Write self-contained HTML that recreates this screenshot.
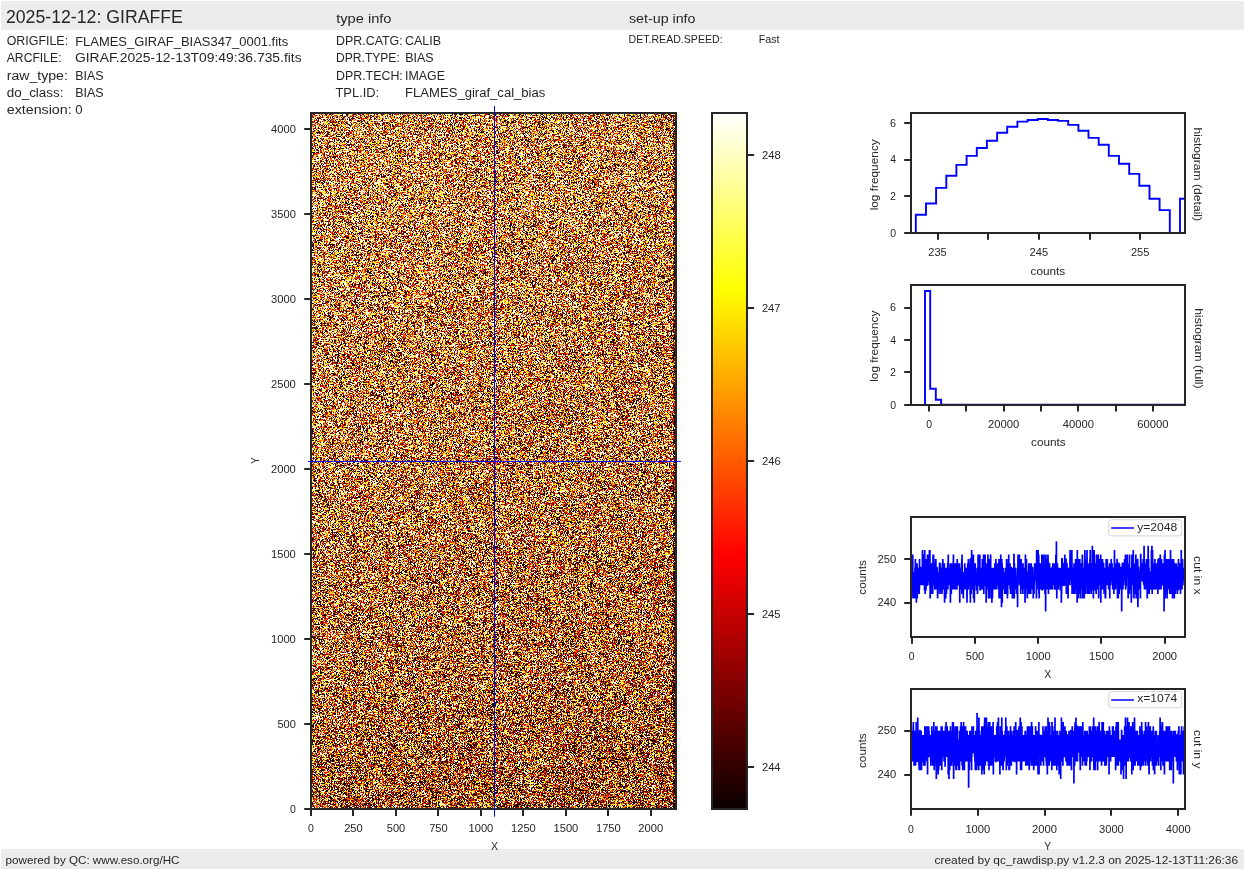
<!DOCTYPE html>
<html><head><meta charset="utf-8"><style>
html,body{margin:0;padding:0;background:#fff;width:1245px;height:870px;overflow:hidden}
#img{position:absolute;left:311px;top:113px;width:365px;height:696px;background:linear-gradient(rgb(201,135,75),rgb(183,112,56) 75%,rgb(177,107,51) 85%,rgb(165,95,43))}
svg{position:absolute;left:0;top:0}
text{font-family:"Liberation Sans",sans-serif;fill:#262626}
</style></head><body>
<canvas id="img" width="365" height="696"></canvas>
<svg width="1245" height="870">
<rect x="1" y="1" width="1243" height="29" fill="#ececec"/>
<rect x="1" y="849" width="1243" height="20" fill="#ececec"/>
<text x="5.92" y="23.30" font-size="17.64" textLength="176.95" lengthAdjust="spacingAndGlyphs">2025-12-12: GIRAFFE</text>
<text x="336.28" y="22.90" font-size="13.22" textLength="55.18" lengthAdjust="spacingAndGlyphs">type info</text>
<text x="628.97" y="22.60" font-size="13.22" textLength="66.55" lengthAdjust="spacingAndGlyphs">set-up info</text>
<text x="6.73" y="44.90" font-size="13.22" textLength="61.37" lengthAdjust="spacingAndGlyphs">ORIGFILE:</text>
<text x="75.21" y="45.60" font-size="13.22" textLength="212.96" lengthAdjust="spacingAndGlyphs">FLAMES_GIRAF_BIAS347_0001.fits</text>
<text x="6.72" y="61.90" font-size="13.22" textLength="54.80" lengthAdjust="spacingAndGlyphs">ARCFILE:</text>
<text x="74.99" y="61.90" font-size="13.22" textLength="226.66" lengthAdjust="spacingAndGlyphs">GIRAF.2025-12-13T09:49:36.735.fits</text>
<text x="6.81" y="80.00" font-size="13.22" textLength="61.00" lengthAdjust="spacingAndGlyphs">raw_type:</text>
<text x="75.25" y="80.00" font-size="13.22" textLength="28.42" lengthAdjust="spacingAndGlyphs">BIAS</text>
<text x="6.75" y="96.90" font-size="13.22" textLength="56.75" lengthAdjust="spacingAndGlyphs">do_class:</text>
<text x="75.25" y="96.90" font-size="13.22" textLength="28.42" lengthAdjust="spacingAndGlyphs">BIAS</text>
<text x="6.72" y="113.70" font-size="13.22" textLength="64.90" lengthAdjust="spacingAndGlyphs">extension:</text>
<text x="75.29" y="113.70" font-size="13.22" textLength="7.31" lengthAdjust="spacingAndGlyphs">0</text>
<text x="336.06" y="45.00" font-size="13.22" textLength="66.62" lengthAdjust="spacingAndGlyphs">DPR.CATG:</text>
<text x="404.96" y="45.00" font-size="13.22" textLength="36.19" lengthAdjust="spacingAndGlyphs">CALIB</text>
<text x="336.09" y="61.50" font-size="13.22" textLength="63.66" lengthAdjust="spacingAndGlyphs">DPR.TYPE:</text>
<text x="405.15" y="61.50" font-size="13.22" textLength="28.42" lengthAdjust="spacingAndGlyphs">BIAS</text>
<text x="336.06" y="79.80" font-size="13.22" textLength="66.72" lengthAdjust="spacingAndGlyphs">DPR.TECH:</text>
<text x="405.03" y="79.80" font-size="13.22" textLength="40.02" lengthAdjust="spacingAndGlyphs">IMAGE</text>
<text x="335.48" y="96.50" font-size="13.22" textLength="43.73" lengthAdjust="spacingAndGlyphs">TPL.ID:</text>
<text x="405.10" y="96.50" font-size="13.22" textLength="140.23" lengthAdjust="spacingAndGlyphs">FLAMES_giraf_cal_bias</text>
<text x="628.55" y="42.90" font-size="11.21" textLength="94.03" lengthAdjust="spacingAndGlyphs">DET.READ.SPEED:</text>
<text x="758.64" y="42.90" font-size="11.21" textLength="20.95" lengthAdjust="spacingAndGlyphs">Fast</text>
<text x="5.64" y="864.20" font-size="11.18" textLength="173.83" lengthAdjust="spacingAndGlyphs">powered by QC: www.eso.org/HC</text>
<text x="934.63" y="863.80" font-size="11.06" textLength="303.42" lengthAdjust="spacingAndGlyphs">created by qc_rawdisp.py v1.2.3 on 2025-12-13T11:26:36</text>
<line x1="311.00" y1="809.20" x2="311.00" y2="816.00" stroke="#262626" stroke-width="2.0"/>
<text x="308.06" y="832.00" font-size="10.53" textLength="5.82" lengthAdjust="spacingAndGlyphs">0</text>
<line x1="353.00" y1="809.20" x2="353.00" y2="816.00" stroke="#262626" stroke-width="2.0"/>
<text x="344.17" y="832.00" font-size="10.53" textLength="18.60" lengthAdjust="spacingAndGlyphs">250</text>
<line x1="396.00" y1="809.20" x2="396.00" y2="816.00" stroke="#262626" stroke-width="2.0"/>
<text x="386.77" y="832.00" font-size="10.53" textLength="18.48" lengthAdjust="spacingAndGlyphs">500</text>
<line x1="438.00" y1="809.20" x2="438.00" y2="816.00" stroke="#262626" stroke-width="2.0"/>
<text x="429.19" y="832.00" font-size="10.53" textLength="18.55" lengthAdjust="spacingAndGlyphs">750</text>
<line x1="481.00" y1="809.20" x2="481.00" y2="816.00" stroke="#262626" stroke-width="2.0"/>
<text x="468.52" y="832.00" font-size="10.53" textLength="24.80" lengthAdjust="spacingAndGlyphs">1000</text>
<line x1="523.00" y1="809.20" x2="523.00" y2="816.00" stroke="#262626" stroke-width="2.0"/>
<text x="511.00" y="832.00" font-size="10.53" textLength="24.80" lengthAdjust="spacingAndGlyphs">1250</text>
<line x1="566.00" y1="809.20" x2="566.00" y2="816.00" stroke="#262626" stroke-width="2.0"/>
<text x="553.49" y="832.00" font-size="10.53" textLength="24.80" lengthAdjust="spacingAndGlyphs">1500</text>
<line x1="608.00" y1="809.20" x2="608.00" y2="816.00" stroke="#262626" stroke-width="2.0"/>
<text x="595.97" y="832.00" font-size="10.53" textLength="24.80" lengthAdjust="spacingAndGlyphs">1750</text>
<line x1="651.00" y1="809.20" x2="651.00" y2="816.00" stroke="#262626" stroke-width="2.0"/>
<text x="638.38" y="832.00" font-size="10.53" textLength="24.88" lengthAdjust="spacingAndGlyphs">2000</text>
<line x1="304.20" y1="809.00" x2="311.00" y2="809.00" stroke="#262626" stroke-width="2.0"/>
<text x="290.00" y="813.00" font-size="10.53" textLength="5.82" lengthAdjust="spacingAndGlyphs">0</text>
<line x1="304.20" y1="724.00" x2="311.00" y2="724.00" stroke="#262626" stroke-width="2.0"/>
<text x="277.41" y="727.97" font-size="10.53" textLength="18.48" lengthAdjust="spacingAndGlyphs">500</text>
<line x1="304.20" y1="639.00" x2="311.00" y2="639.00" stroke="#262626" stroke-width="2.0"/>
<text x="271.04" y="642.93" font-size="10.53" textLength="24.80" lengthAdjust="spacingAndGlyphs">1000</text>
<line x1="304.20" y1="554.00" x2="311.00" y2="554.00" stroke="#262626" stroke-width="2.0"/>
<text x="271.04" y="557.90" font-size="10.53" textLength="24.80" lengthAdjust="spacingAndGlyphs">1500</text>
<line x1="304.20" y1="469.00" x2="311.00" y2="469.00" stroke="#262626" stroke-width="2.0"/>
<text x="270.96" y="472.86" font-size="10.53" textLength="24.88" lengthAdjust="spacingAndGlyphs">2000</text>
<line x1="304.20" y1="384.00" x2="311.00" y2="384.00" stroke="#262626" stroke-width="2.0"/>
<text x="270.96" y="387.83" font-size="10.53" textLength="24.88" lengthAdjust="spacingAndGlyphs">2500</text>
<line x1="304.20" y1="299.00" x2="311.00" y2="299.00" stroke="#262626" stroke-width="2.0"/>
<text x="271.08" y="302.79" font-size="10.53" textLength="24.76" lengthAdjust="spacingAndGlyphs">3000</text>
<line x1="304.20" y1="214.00" x2="311.00" y2="214.00" stroke="#262626" stroke-width="2.0"/>
<text x="271.08" y="217.76" font-size="10.53" textLength="24.76" lengthAdjust="spacingAndGlyphs">3500</text>
<line x1="304.20" y1="129.00" x2="311.00" y2="129.00" stroke="#262626" stroke-width="2.0"/>
<text x="271.05" y="132.73" font-size="10.53" textLength="24.79" lengthAdjust="spacingAndGlyphs">4000</text>
<text x="491.07" y="849.80" font-size="11.06" textLength="7.03" lengthAdjust="spacingAndGlyphs">X</text>
<text transform="translate(259.00,464.06) rotate(-90)" x="0" y="0" font-size="11.06" textLength="6.86" lengthAdjust="spacingAndGlyphs">Y</text>
<defs><linearGradient id="hotg" x1="0" y1="0" x2="0" y2="1"><stop offset="0.00" stop-color="rgb(255,255,255)"/><stop offset="0.01" stop-color="rgb(255,255,245)"/><stop offset="0.02" stop-color="rgb(255,255,235)"/><stop offset="0.03" stop-color="rgb(255,255,225)"/><stop offset="0.04" stop-color="rgb(255,255,215)"/><stop offset="0.05" stop-color="rgb(255,255,205)"/><stop offset="0.06" stop-color="rgb(255,255,195)"/><stop offset="0.07" stop-color="rgb(255,255,185)"/><stop offset="0.08" stop-color="rgb(255,255,175)"/><stop offset="0.09" stop-color="rgb(255,255,165)"/><stop offset="0.10" stop-color="rgb(255,255,155)"/><stop offset="0.11" stop-color="rgb(255,255,145)"/><stop offset="0.12" stop-color="rgb(255,255,135)"/><stop offset="0.13" stop-color="rgb(255,255,124)"/><stop offset="0.14" stop-color="rgb(255,255,114)"/><stop offset="0.15" stop-color="rgb(255,255,104)"/><stop offset="0.16" stop-color="rgb(255,255,94)"/><stop offset="0.17" stop-color="rgb(255,255,84)"/><stop offset="0.18" stop-color="rgb(255,255,74)"/><stop offset="0.19" stop-color="rgb(255,255,64)"/><stop offset="0.20" stop-color="rgb(255,255,54)"/><stop offset="0.21" stop-color="rgb(255,255,44)"/><stop offset="0.22" stop-color="rgb(255,255,34)"/><stop offset="0.23" stop-color="rgb(255,255,24)"/><stop offset="0.24" stop-color="rgb(255,255,14)"/><stop offset="0.25" stop-color="rgb(255,255,4)"/><stop offset="0.26" stop-color="rgb(255,251,0)"/><stop offset="0.27" stop-color="rgb(255,244,0)"/><stop offset="0.28" stop-color="rgb(255,238,0)"/><stop offset="0.29" stop-color="rgb(255,231,0)"/><stop offset="0.30" stop-color="rgb(255,224,0)"/><stop offset="0.31" stop-color="rgb(255,217,0)"/><stop offset="0.32" stop-color="rgb(255,211,0)"/><stop offset="0.33" stop-color="rgb(255,204,0)"/><stop offset="0.34" stop-color="rgb(255,197,0)"/><stop offset="0.35" stop-color="rgb(255,191,0)"/><stop offset="0.36" stop-color="rgb(255,184,0)"/><stop offset="0.37" stop-color="rgb(255,177,0)"/><stop offset="0.38" stop-color="rgb(255,171,0)"/><stop offset="0.39" stop-color="rgb(255,164,0)"/><stop offset="0.40" stop-color="rgb(255,157,0)"/><stop offset="0.41" stop-color="rgb(255,151,0)"/><stop offset="0.42" stop-color="rgb(255,144,0)"/><stop offset="0.43" stop-color="rgb(255,137,0)"/><stop offset="0.44" stop-color="rgb(255,130,0)"/><stop offset="0.45" stop-color="rgb(255,124,0)"/><stop offset="0.46" stop-color="rgb(255,117,0)"/><stop offset="0.47" stop-color="rgb(255,110,0)"/><stop offset="0.48" stop-color="rgb(255,104,0)"/><stop offset="0.49" stop-color="rgb(255,97,0)"/><stop offset="0.50" stop-color="rgb(255,90,0)"/><stop offset="0.51" stop-color="rgb(255,84,0)"/><stop offset="0.52" stop-color="rgb(255,77,0)"/><stop offset="0.53" stop-color="rgb(255,70,0)"/><stop offset="0.54" stop-color="rgb(255,64,0)"/><stop offset="0.55" stop-color="rgb(255,57,0)"/><stop offset="0.56" stop-color="rgb(255,50,0)"/><stop offset="0.57" stop-color="rgb(255,43,0)"/><stop offset="0.58" stop-color="rgb(255,37,0)"/><stop offset="0.59" stop-color="rgb(255,30,0)"/><stop offset="0.60" stop-color="rgb(255,23,0)"/><stop offset="0.61" stop-color="rgb(255,17,0)"/><stop offset="0.62" stop-color="rgb(255,10,0)"/><stop offset="0.63" stop-color="rgb(255,3,0)"/><stop offset="0.64" stop-color="rgb(252,0,0)"/><stop offset="0.65" stop-color="rgb(245,0,0)"/><stop offset="0.66" stop-color="rgb(238,0,0)"/><stop offset="0.67" stop-color="rgb(232,0,0)"/><stop offset="0.68" stop-color="rgb(225,0,0)"/><stop offset="0.69" stop-color="rgb(218,0,0)"/><stop offset="0.70" stop-color="rgb(211,0,0)"/><stop offset="0.71" stop-color="rgb(205,0,0)"/><stop offset="0.72" stop-color="rgb(198,0,0)"/><stop offset="0.73" stop-color="rgb(191,0,0)"/><stop offset="0.74" stop-color="rgb(185,0,0)"/><stop offset="0.75" stop-color="rgb(178,0,0)"/><stop offset="0.76" stop-color="rgb(171,0,0)"/><stop offset="0.77" stop-color="rgb(165,0,0)"/><stop offset="0.78" stop-color="rgb(158,0,0)"/><stop offset="0.79" stop-color="rgb(151,0,0)"/><stop offset="0.80" stop-color="rgb(144,0,0)"/><stop offset="0.81" stop-color="rgb(138,0,0)"/><stop offset="0.82" stop-color="rgb(131,0,0)"/><stop offset="0.83" stop-color="rgb(124,0,0)"/><stop offset="0.84" stop-color="rgb(118,0,0)"/><stop offset="0.85" stop-color="rgb(111,0,0)"/><stop offset="0.86" stop-color="rgb(104,0,0)"/><stop offset="0.87" stop-color="rgb(98,0,0)"/><stop offset="0.88" stop-color="rgb(91,0,0)"/><stop offset="0.89" stop-color="rgb(84,0,0)"/><stop offset="0.90" stop-color="rgb(78,0,0)"/><stop offset="0.91" stop-color="rgb(71,0,0)"/><stop offset="0.92" stop-color="rgb(64,0,0)"/><stop offset="0.93" stop-color="rgb(57,0,0)"/><stop offset="0.94" stop-color="rgb(51,0,0)"/><stop offset="0.95" stop-color="rgb(44,0,0)"/><stop offset="0.96" stop-color="rgb(37,0,0)"/><stop offset="0.97" stop-color="rgb(31,0,0)"/><stop offset="0.98" stop-color="rgb(24,0,0)"/><stop offset="0.99" stop-color="rgb(17,0,0)"/><stop offset="1.00" stop-color="rgb(11,0,0)"/></linearGradient></defs>
<rect x="712" y="113" width="35" height="696" fill="url(#hotg)" stroke="#262626" stroke-width="2"/>
<line x1="747.30" y1="767.00" x2="754.10" y2="767.00" stroke="#262626" stroke-width="2.0"/>
<text x="761.94" y="770.80" font-size="10.53" textLength="18.64" lengthAdjust="spacingAndGlyphs">244</text>
<line x1="747.30" y1="614.00" x2="754.10" y2="614.00" stroke="#262626" stroke-width="2.0"/>
<text x="761.95" y="617.80" font-size="10.53" textLength="18.45" lengthAdjust="spacingAndGlyphs">245</text>
<line x1="747.30" y1="461.00" x2="754.10" y2="461.00" stroke="#262626" stroke-width="2.0"/>
<text x="761.94" y="464.80" font-size="10.53" textLength="18.71" lengthAdjust="spacingAndGlyphs">246</text>
<line x1="747.30" y1="308.00" x2="754.10" y2="308.00" stroke="#262626" stroke-width="2.0"/>
<text x="761.94" y="311.80" font-size="10.53" textLength="18.56" lengthAdjust="spacingAndGlyphs">247</text>
<line x1="747.30" y1="155.00" x2="754.10" y2="155.00" stroke="#262626" stroke-width="2.0"/>
<text x="761.94" y="158.80" font-size="10.53" textLength="18.66" lengthAdjust="spacingAndGlyphs">248</text>
<rect x="311" y="113" width="365" height="696" fill="none" stroke="#262626" stroke-width="2"/>
<line x1="494.50" y1="106.00" x2="494.50" y2="816.70" stroke="#0000ff" stroke-width="1.0"/>
<line x1="308.00" y1="461.40" x2="680.90" y2="461.40" stroke="#0000ff" stroke-width="1.0"/>
<polyline fill="none" stroke="#0000ff" stroke-width="1.9" points="915.8,233.0 915.8,214.8 926.0,214.8 926.0,203.5 936.1,203.5 936.1,187.9 946.3,187.9 946.3,175.7 956.4,175.7 956.4,164.9 966.6,164.9 966.6,155.9 976.8,155.9 976.8,148.0 986.9,148.0 986.9,140.7 997.1,140.7 997.1,132.8 1007.2,132.8 1007.2,126.8 1017.4,126.8 1017.4,121.6 1027.6,121.6 1027.6,120.0 1037.7,120.0 1037.7,119.0 1047.9,119.0 1047.9,120.0 1058.0,120.0 1058.0,120.9 1068.2,120.9 1068.2,124.9 1078.4,124.9 1078.4,130.8 1088.5,130.8 1088.5,137.9 1098.7,137.9 1098.7,144.7 1108.8,144.7 1108.8,155.9 1119.0,155.9 1119.0,163.8 1129.2,163.8 1129.2,173.9 1139.3,173.9 1139.3,185.8 1149.5,185.8 1149.5,198.7 1159.6,198.7 1159.6,210.1 1169.8,210.1 1169.8,233.0 1180.0,233.0 1180.0,233.0 1180.0,198.7 1185.3,198.7"/>
<rect x="911" y="113" width="274" height="120" fill="none" stroke="#262626" stroke-width="2"/>
<line x1="904.20" y1="233.00" x2="911.00" y2="233.00" stroke="#262626" stroke-width="2.0"/>
<text x="890.20" y="236.80" font-size="10.53" textLength="5.82" lengthAdjust="spacingAndGlyphs">0</text>
<line x1="904.20" y1="196.00" x2="911.00" y2="196.00" stroke="#262626" stroke-width="2.0"/>
<text x="890.21" y="200.10" font-size="10.53" textLength="5.59" lengthAdjust="spacingAndGlyphs">2</text>
<line x1="904.20" y1="160.00" x2="911.00" y2="160.00" stroke="#262626" stroke-width="2.0"/>
<text x="890.26" y="163.40" font-size="10.53" textLength="5.81" lengthAdjust="spacingAndGlyphs">4</text>
<line x1="904.20" y1="123.00" x2="911.00" y2="123.00" stroke="#262626" stroke-width="2.0"/>
<text x="890.13" y="126.70" font-size="10.53" textLength="6.01" lengthAdjust="spacingAndGlyphs">6</text>
<line x1="938.00" y1="233.00" x2="938.00" y2="239.80" stroke="#262626" stroke-width="2.0"/>
<text x="928.30" y="256.00" font-size="10.53" textLength="18.45" lengthAdjust="spacingAndGlyphs">235</text>
<line x1="988.00" y1="233.00" x2="988.00" y2="239.80" stroke="#262626" stroke-width="2.0"/>
<line x1="1039.00" y1="233.00" x2="1039.00" y2="239.80" stroke="#262626" stroke-width="2.0"/>
<text x="1029.60" y="256.00" font-size="10.53" textLength="18.45" lengthAdjust="spacingAndGlyphs">245</text>
<line x1="1090.00" y1="233.00" x2="1090.00" y2="239.80" stroke="#262626" stroke-width="2.0"/>
<line x1="1140.00" y1="233.00" x2="1140.00" y2="239.80" stroke="#262626" stroke-width="2.0"/>
<text x="1130.90" y="256.00" font-size="10.53" textLength="18.45" lengthAdjust="spacingAndGlyphs">255</text>
<text x="1030.53" y="274.50" font-size="11.06" textLength="34.76" lengthAdjust="spacingAndGlyphs">counts</text>
<text transform="translate(877.91,210.37) rotate(-90)" x="0" y="0" font-size="11.06" textLength="71.09" lengthAdjust="spacingAndGlyphs">log frequency</text>
<text transform="translate(1194.09,127.45) rotate(90)" x="0" y="0" font-size="11.06" textLength="93.65" lengthAdjust="spacingAndGlyphs">histogram (detail)</text>
<polyline fill="none" stroke="#0000ff" stroke-width="1.9" points="925.0,404.7 925.0,291.0 930.2,291.0 930.2,388.7 935.8,388.7 935.8,399.7 941.1,399.7 941.1,404.7 1185.3,404.7"/>
<rect x="911" y="285" width="274" height="120" fill="none" stroke="#262626" stroke-width="2"/>
<line x1="904.20" y1="405.00" x2="911.00" y2="405.00" stroke="#262626" stroke-width="2.0"/>
<text x="890.20" y="408.50" font-size="10.53" textLength="5.82" lengthAdjust="spacingAndGlyphs">0</text>
<line x1="904.20" y1="372.00" x2="911.00" y2="372.00" stroke="#262626" stroke-width="2.0"/>
<text x="890.21" y="376.10" font-size="10.53" textLength="5.59" lengthAdjust="spacingAndGlyphs">2</text>
<line x1="904.20" y1="340.00" x2="911.00" y2="340.00" stroke="#262626" stroke-width="2.0"/>
<text x="890.26" y="343.70" font-size="10.53" textLength="5.81" lengthAdjust="spacingAndGlyphs">4</text>
<line x1="904.20" y1="308.00" x2="911.00" y2="308.00" stroke="#262626" stroke-width="2.0"/>
<text x="890.13" y="311.30" font-size="10.53" textLength="6.01" lengthAdjust="spacingAndGlyphs">6</text>
<line x1="929.00" y1="404.70" x2="929.00" y2="411.50" stroke="#262626" stroke-width="2.0"/>
<text x="926.16" y="428.10" font-size="10.53" textLength="5.82" lengthAdjust="spacingAndGlyphs">0</text>
<line x1="966.00" y1="404.70" x2="966.00" y2="411.50" stroke="#262626" stroke-width="2.0"/>
<line x1="1004.00" y1="404.70" x2="1004.00" y2="411.50" stroke="#262626" stroke-width="2.0"/>
<text x="988.09" y="428.10" font-size="10.53" textLength="31.21" lengthAdjust="spacingAndGlyphs">20000</text>
<line x1="1041.00" y1="404.70" x2="1041.00" y2="411.50" stroke="#262626" stroke-width="2.0"/>
<line x1="1078.00" y1="404.70" x2="1078.00" y2="411.50" stroke="#262626" stroke-width="2.0"/>
<text x="1062.81" y="428.10" font-size="10.53" textLength="31.12" lengthAdjust="spacingAndGlyphs">40000</text>
<line x1="1116.00" y1="404.70" x2="1116.00" y2="411.50" stroke="#262626" stroke-width="2.0"/>
<line x1="1153.00" y1="404.70" x2="1153.00" y2="411.50" stroke="#262626" stroke-width="2.0"/>
<text x="1137.31" y="428.10" font-size="10.53" textLength="31.26" lengthAdjust="spacingAndGlyphs">60000</text>
<text x="1031.03" y="446.00" font-size="11.06" textLength="34.76" lengthAdjust="spacingAndGlyphs">counts</text>
<text transform="translate(877.91,381.77) rotate(-90)" x="0" y="0" font-size="11.06" textLength="71.09" lengthAdjust="spacingAndGlyphs">log frequency</text>
<text transform="translate(1194.59,308.25) rotate(90)" x="0" y="0" font-size="11.06" textLength="80.36" lengthAdjust="spacingAndGlyphs">histogram (full)</text>
<path fill="none" stroke="#0000ff" stroke-width="1.7" d="M911.70,567.7L911.83,589.6L911.95,589.6L912.08,572.1L912.21,558.9L912.33,572.1L912.46,567.7L912.59,576.5L912.71,554.5L912.84,585.2L912.97,598.4L913.09,580.8L913.22,576.5L913.34,576.5L913.47,585.2L913.60,576.5L913.72,585.2L913.85,576.5L913.98,589.6L914.10,580.8L914.23,572.1L914.36,580.8L914.48,580.8L914.61,598.4L914.74,580.8L914.86,585.2L914.99,567.7L915.12,585.2L915.24,576.5L915.37,558.9L915.50,589.6L915.62,580.8L915.75,585.2L915.87,572.1L916.00,585.2L916.13,567.7L916.25,585.2L916.38,602.8L916.51,572.1L916.63,563.3L916.76,594.0L916.89,580.8L917.01,563.3L917.14,580.8L917.27,598.4L917.39,585.2L917.52,567.7L917.65,594.0L917.77,589.6L917.90,576.5L918.03,567.7L918.15,585.2L918.28,585.2L918.40,576.5L918.53,585.2L918.66,585.2L918.78,576.5L918.91,572.1L919.04,572.1L919.16,594.0L919.29,567.7L919.42,589.6L919.54,558.9L919.67,576.5L919.80,580.8L919.92,580.8L920.05,580.8L920.18,576.5L920.30,585.2L920.43,572.1L920.56,585.2L920.68,567.7L920.81,567.7L920.93,585.2L921.06,576.5L921.19,576.5L921.31,576.5L921.44,580.8L921.57,585.2L921.69,580.8L921.82,585.2L921.95,576.5L922.07,585.2L922.20,580.8L922.33,585.2L922.45,550.1L922.58,572.1L922.71,585.2L922.83,580.8L922.96,572.1L923.09,558.9L923.21,572.1L923.34,567.7L923.46,554.5L923.59,585.2L923.72,576.5L923.84,580.8L923.97,585.2L924.10,580.8L924.22,585.2L924.35,563.3L924.48,589.6L924.60,589.6L924.73,550.1L924.86,572.1L924.98,563.3L925.11,594.0L925.24,558.9L925.36,567.7L925.49,576.5L925.62,567.7L925.74,558.9L925.87,589.6L925.99,589.6L926.12,580.8L926.25,558.9L926.37,572.1L926.50,580.8L926.63,572.1L926.75,576.5L926.88,572.1L927.01,585.2L927.13,585.2L927.26,567.7L927.39,576.5L927.51,554.5L927.64,585.2L927.77,576.5L927.89,563.3L928.02,576.5L928.15,576.5L928.27,576.5L928.40,580.8L928.52,572.1L928.65,576.5L928.78,580.8L928.90,554.5L929.03,580.8L929.16,580.8L929.28,576.5L929.41,550.1L929.54,576.5L929.66,585.2L929.79,572.1L929.92,550.1L930.04,580.8L930.17,598.4L930.30,594.0L930.42,580.8L930.55,580.8L930.68,576.5L930.80,572.1L930.93,594.0L931.05,572.1L931.18,585.2L931.31,572.1L931.43,563.3L931.56,594.0L931.69,589.6L931.81,580.8L931.94,567.7L932.07,576.5L932.19,572.1L932.32,576.5L932.45,572.1L932.57,589.6L932.70,594.0L932.83,576.5L932.95,567.7L933.08,554.5L933.21,576.5L933.33,572.1L933.46,580.8L933.58,554.5L933.71,567.7L933.84,576.5L933.96,558.9L934.09,585.2L934.22,572.1L934.34,567.7L934.47,580.8L934.60,580.8L934.72,572.1L934.85,589.6L934.98,585.2L935.10,572.1L935.23,563.3L935.36,576.5L935.48,567.7L935.61,572.1L935.74,576.5L935.86,558.9L935.99,580.8L936.11,580.8L936.24,589.6L936.37,576.5L936.49,576.5L936.62,585.2L936.75,576.5L936.87,567.7L937.00,567.7L937.13,580.8L937.25,567.7L937.38,572.1L937.51,576.5L937.63,598.4L937.76,572.1L937.89,585.2L938.01,594.0L938.14,585.2L938.27,585.2L938.39,580.8L938.52,589.6L938.64,585.2L938.77,576.5L938.90,585.2L939.02,576.5L939.15,580.8L939.28,580.8L939.40,580.8L939.53,563.3L939.66,563.3L939.78,580.8L939.91,585.2L940.04,594.0L940.16,563.3L940.29,580.8L940.42,572.1L940.54,563.3L940.67,567.7L940.80,576.5L940.92,567.7L941.05,572.1L941.17,567.7L941.30,589.6L941.43,589.6L941.55,585.2L941.68,576.5L941.81,585.2L941.93,594.0L942.06,589.6L942.19,580.8L942.31,585.2L942.44,580.8L942.57,576.5L942.69,580.8L942.82,558.9L942.95,580.8L943.07,589.6L943.20,576.5L943.33,585.2L943.45,567.7L943.58,585.2L943.70,572.1L943.83,580.8L943.96,585.2L944.08,576.5L944.21,576.5L944.34,563.3L944.46,589.6L944.59,602.8L944.72,572.1L944.84,567.7L944.97,576.5L945.10,585.2L945.22,576.5L945.35,585.2L945.48,572.1L945.60,576.5L945.73,598.4L945.86,576.5L945.98,589.6L946.11,589.6L946.23,567.7L946.36,572.1L946.49,594.0L946.61,585.2L946.74,580.8L946.87,567.7L946.99,585.2L947.12,589.6L947.25,576.5L947.37,576.5L947.50,585.2L947.63,563.3L947.75,576.5L947.88,589.6L948.01,567.7L948.13,572.1L948.26,554.5L948.38,572.1L948.51,585.2L948.64,576.5L948.76,580.8L948.89,572.1L949.02,585.2L949.14,580.8L949.27,580.8L949.40,580.8L949.52,567.7L949.65,576.5L949.78,576.5L949.90,580.8L950.03,567.7L950.16,572.1L950.28,563.3L950.41,602.8L950.54,567.7L950.66,576.5L950.79,563.3L950.92,576.5L951.04,585.2L951.17,580.8L951.29,594.0L951.42,585.2L951.55,567.7L951.67,563.3L951.80,572.1L951.93,563.3L952.05,572.1L952.18,585.2L952.31,580.8L952.43,576.5L952.56,580.8L952.69,580.8L952.81,572.1L952.94,589.6L953.07,572.1L953.19,580.8L953.32,563.3L953.45,554.5L953.57,572.1L953.70,585.2L953.82,567.7L953.95,563.3L954.08,589.6L954.20,572.1L954.33,576.5L954.46,580.8L954.58,572.1L954.71,572.1L954.84,576.5L954.96,567.7L955.09,576.5L955.22,563.3L955.34,572.1L955.47,567.7L955.60,589.6L955.72,563.3L955.85,580.8L955.98,563.3L956.10,580.8L956.23,589.6L956.35,580.8L956.48,580.8L956.61,572.1L956.73,585.2L956.86,589.6L956.99,576.5L957.11,585.2L957.24,558.9L957.37,585.2L957.49,563.3L957.62,567.7L957.75,572.1L957.87,576.5L958.00,567.7L958.13,567.7L958.25,563.3L958.38,576.5L958.50,572.1L958.63,576.5L958.76,576.5L958.88,572.1L959.01,572.1L959.14,585.2L959.26,585.2L959.39,580.8L959.52,563.3L959.64,580.8L959.77,602.8L959.90,567.7L960.02,580.8L960.15,589.6L960.28,576.5L960.40,572.1L960.53,567.7L960.66,572.1L960.78,572.1L960.91,589.6L961.04,580.8L961.16,567.7L961.29,580.8L961.41,576.5L961.54,576.5L961.67,572.1L961.79,558.9L961.92,594.0L962.05,554.5L962.17,585.2L962.30,589.6L962.43,580.8L962.55,580.8L962.68,594.0L962.81,585.2L962.93,585.2L963.06,585.2L963.19,576.5L963.31,598.4L963.44,585.2L963.57,576.5L963.69,580.8L963.82,576.5L963.94,572.1L964.07,580.8L964.20,576.5L964.32,580.8L964.45,580.8L964.58,589.6L964.70,563.3L964.83,567.7L964.96,585.2L965.08,589.6L965.21,567.7L965.34,572.1L965.46,589.6L965.59,576.5L965.72,567.7L965.84,589.6L965.97,576.5L966.10,572.1L966.22,589.6L966.35,580.8L966.47,576.5L966.60,572.1L966.73,576.5L966.85,576.5L966.98,602.8L967.11,589.6L967.23,580.8L967.36,567.7L967.49,580.8L967.61,580.8L967.74,563.3L967.87,572.1L967.99,576.5L968.12,576.5L968.25,589.6L968.37,558.9L968.50,585.2L968.62,558.9L968.75,585.2L968.88,572.1L969.00,585.2L969.13,580.8L969.26,567.7L969.38,576.5L969.51,576.5L969.64,567.7L969.76,585.2L969.89,576.5L970.02,563.3L970.14,594.0L970.27,567.7L970.40,602.8L970.52,576.5L970.65,558.9L970.78,558.9L970.90,576.5L971.03,558.9L971.16,580.8L971.28,594.0L971.41,563.3L971.53,576.5L971.66,550.1L971.79,585.2L971.91,589.6L972.04,567.7L972.17,576.5L972.29,563.3L972.42,572.1L972.55,589.6L972.67,580.8L972.80,585.2L972.93,563.3L973.05,563.3L973.18,572.1L973.31,580.8L973.43,554.5L973.56,598.4L973.69,567.7L973.81,585.2L973.94,580.8L974.06,567.7L974.19,594.0L974.32,602.8L974.44,585.2L974.57,580.8L974.70,576.5L974.82,567.7L974.95,572.1L975.08,572.1L975.20,563.3L975.33,580.8L975.46,585.2L975.58,572.1L975.71,576.5L975.84,567.7L975.96,580.8L976.09,580.8L976.22,580.8L976.34,576.5L976.47,589.6L976.59,589.6L976.72,585.2L976.85,576.5L976.97,576.5L977.10,572.1L977.23,589.6L977.35,580.8L977.48,594.0L977.61,585.2L977.73,567.7L977.86,576.5L977.99,572.1L978.11,554.5L978.24,585.2L978.37,585.2L978.49,572.1L978.62,572.1L978.75,572.1L978.87,576.5L979.00,580.8L979.12,567.7L979.25,572.1L979.38,567.7L979.50,576.5L979.63,563.3L979.76,585.2L979.88,554.5L980.01,589.6L980.14,589.6L980.26,589.6L980.39,567.7L980.52,589.6L980.64,580.8L980.77,585.2L980.90,585.2L981.02,572.1L981.15,572.1L981.28,576.5L981.40,567.7L981.53,580.8L981.65,572.1L981.78,589.6L981.91,580.8L982.03,576.5L982.16,580.8L982.29,563.3L982.41,558.9L982.54,572.1L982.67,558.9L982.79,572.1L982.92,580.8L983.05,580.8L983.17,576.5L983.30,585.2L983.43,589.6L983.55,554.5L983.68,580.8L983.81,594.0L983.93,585.2L984.06,585.2L984.18,585.2L984.31,580.8L984.44,576.5L984.56,576.5L984.69,576.5L984.82,567.7L984.94,567.7L985.07,554.5L985.20,580.8L985.32,572.1L985.45,585.2L985.58,585.2L985.70,580.8L985.83,567.7L985.96,580.8L986.08,594.0L986.21,602.8L986.34,585.2L986.46,572.1L986.59,589.6L986.71,572.1L986.84,563.3L986.97,572.1L987.09,585.2L987.22,585.2L987.35,576.5L987.47,576.5L987.60,572.1L987.73,580.8L987.85,589.6L987.98,554.5L988.11,585.2L988.23,572.1L988.36,576.5L988.49,580.8L988.61,598.4L988.74,585.2L988.87,580.8L988.99,572.1L989.12,567.7L989.24,558.9L989.37,576.5L989.50,567.7L989.62,576.5L989.75,576.5L989.88,576.5L990.00,598.4L990.13,558.9L990.26,576.5L990.38,580.8L990.51,585.2L990.64,554.5L990.76,585.2L990.89,585.2L991.02,576.5L991.14,580.8L991.27,589.6L991.40,585.2L991.52,576.5L991.65,580.8L991.77,585.2L991.90,602.8L992.03,572.1L992.15,567.7L992.28,580.8L992.41,598.4L992.53,594.0L992.66,585.2L992.79,580.8L992.91,572.1L993.04,567.7L993.17,572.1L993.29,585.2L993.42,567.7L993.55,589.6L993.67,580.8L993.80,572.1L993.93,576.5L994.05,567.7L994.18,576.5L994.30,572.1L994.43,572.1L994.56,567.7L994.68,585.2L994.81,580.8L994.94,563.3L995.06,567.7L995.19,589.6L995.32,567.7L995.44,580.8L995.57,576.5L995.70,580.8L995.82,558.9L995.95,572.1L996.08,580.8L996.20,580.8L996.33,576.5L996.46,585.2L996.58,576.5L996.71,589.6L996.83,585.2L996.96,572.1L997.09,585.2L997.21,580.8L997.34,580.8L997.47,576.5L997.59,567.7L997.72,563.3L997.85,585.2L997.97,572.1L998.10,580.8L998.23,572.1L998.35,576.5L998.48,585.2L998.61,567.7L998.73,585.2L998.86,589.6L998.99,558.9L999.11,598.4L999.24,576.5L999.36,572.1L999.49,585.2L999.62,580.8L999.74,572.1L999.87,589.6L1000.00,563.3L1000.12,567.7L1000.25,598.4L1000.38,567.7L1000.50,589.6L1000.63,576.5L1000.76,554.5L1000.88,594.0L1001.01,567.7L1001.14,580.8L1001.26,563.3L1001.39,558.9L1001.52,607.2L1001.64,576.5L1001.77,558.9L1001.89,576.5L1002.02,594.0L1002.15,563.3L1002.27,602.8L1002.40,585.2L1002.53,585.2L1002.65,580.8L1002.78,572.1L1002.91,580.8L1003.03,576.5L1003.16,589.6L1003.29,580.8L1003.41,580.8L1003.54,567.7L1003.67,580.8L1003.79,585.2L1003.92,585.2L1004.05,572.1L1004.17,585.2L1004.30,572.1L1004.42,576.5L1004.55,572.1L1004.68,580.8L1004.80,594.0L1004.93,576.5L1005.06,576.5L1005.18,576.5L1005.31,572.1L1005.44,585.2L1005.56,589.6L1005.69,580.8L1005.82,567.7L1005.94,580.8L1006.07,576.5L1006.20,585.2L1006.32,594.0L1006.45,576.5L1006.58,558.9L1006.70,580.8L1006.83,558.9L1006.95,585.2L1007.08,585.2L1007.21,563.3L1007.33,576.5L1007.46,598.4L1007.59,585.2L1007.71,594.0L1007.84,576.5L1007.97,572.1L1008.09,572.1L1008.22,572.1L1008.35,567.7L1008.47,580.8L1008.60,572.1L1008.73,554.5L1008.85,567.7L1008.98,576.5L1009.11,576.5L1009.23,580.8L1009.36,585.2L1009.48,576.5L1009.61,585.2L1009.74,567.7L1009.86,572.1L1009.99,563.3L1010.12,589.6L1010.24,572.1L1010.37,567.7L1010.50,567.7L1010.62,594.0L1010.75,572.1L1010.88,589.6L1011.00,567.7L1011.13,567.7L1011.26,589.6L1011.38,589.6L1011.51,576.5L1011.63,585.2L1011.76,572.1L1011.89,589.6L1012.01,576.5L1012.14,576.5L1012.27,567.7L1012.39,598.4L1012.52,572.1L1012.65,585.2L1012.77,598.4L1012.90,585.2L1013.03,567.7L1013.15,576.5L1013.28,576.5L1013.41,576.5L1013.53,576.5L1013.66,572.1L1013.79,594.0L1013.91,554.5L1014.04,554.5L1014.17,585.2L1014.29,598.4L1014.42,563.3L1014.54,580.8L1014.67,589.6L1014.80,576.5L1014.92,585.2L1015.05,572.1L1015.18,572.1L1015.30,572.1L1015.43,585.2L1015.56,585.2L1015.68,576.5L1015.81,567.7L1015.94,576.5L1016.06,576.5L1016.19,589.6L1016.32,576.5L1016.44,594.0L1016.57,585.2L1016.70,585.2L1016.82,585.2L1016.95,576.5L1017.07,576.5L1017.20,589.6L1017.33,576.5L1017.45,576.5L1017.58,607.2L1017.71,576.5L1017.83,572.1L1017.96,563.3L1018.09,554.5L1018.21,572.1L1018.34,576.5L1018.47,576.5L1018.59,576.5L1018.72,576.5L1018.85,576.5L1018.97,580.8L1019.10,563.3L1019.23,572.1L1019.35,554.5L1019.48,585.2L1019.60,572.1L1019.73,572.1L1019.86,563.3L1019.98,567.7L1020.11,558.9L1020.24,572.1L1020.36,580.8L1020.49,567.7L1020.62,576.5L1020.74,594.0L1020.87,572.1L1021.00,572.1L1021.12,558.9L1021.25,572.1L1021.38,580.8L1021.50,585.2L1021.63,572.1L1021.76,572.1L1021.88,567.7L1022.01,585.2L1022.13,589.6L1022.26,585.2L1022.39,572.1L1022.51,563.3L1022.64,585.2L1022.77,572.1L1022.89,594.0L1023.02,563.3L1023.15,585.2L1023.27,580.8L1023.40,567.7L1023.53,572.1L1023.65,572.1L1023.78,576.5L1023.91,580.8L1024.03,572.1L1024.16,572.1L1024.29,580.8L1024.41,580.8L1024.54,589.6L1024.66,572.1L1024.79,567.7L1024.92,589.6L1025.04,602.8L1025.17,580.8L1025.30,594.0L1025.42,554.5L1025.55,567.7L1025.68,589.6L1025.80,580.8L1025.93,572.1L1026.06,576.5L1026.18,558.9L1026.31,576.5L1026.44,558.9L1026.56,576.5L1026.69,572.1L1026.82,572.1L1026.94,576.5L1027.07,572.1L1027.19,580.8L1027.32,598.4L1027.45,576.5L1027.57,585.2L1027.70,580.8L1027.83,589.6L1027.95,576.5L1028.08,572.1L1028.21,572.1L1028.33,576.5L1028.46,572.1L1028.59,585.2L1028.71,567.7L1028.84,563.3L1028.97,567.7L1029.09,594.0L1029.22,585.2L1029.35,563.3L1029.47,576.5L1029.60,567.7L1029.72,572.1L1029.85,567.7L1029.98,572.1L1030.10,563.3L1030.23,576.5L1030.36,585.2L1030.48,576.5L1030.61,585.2L1030.74,594.0L1030.86,580.8L1030.99,567.7L1031.12,580.8L1031.24,563.3L1031.37,576.5L1031.50,580.8L1031.62,576.5L1031.75,567.7L1031.88,589.6L1032.00,580.8L1032.13,580.8L1032.25,567.7L1032.38,567.7L1032.51,585.2L1032.63,567.7L1032.76,576.5L1032.89,576.5L1033.01,580.8L1033.14,585.2L1033.27,598.4L1033.39,576.5L1033.52,576.5L1033.65,576.5L1033.77,580.8L1033.90,580.8L1034.03,594.0L1034.15,580.8L1034.28,585.2L1034.40,580.8L1034.53,572.1L1034.66,563.3L1034.78,580.8L1034.91,576.5L1035.04,576.5L1035.16,563.3L1035.29,572.1L1035.42,567.7L1035.54,576.5L1035.67,580.8L1035.80,572.1L1035.92,580.8L1036.05,563.3L1036.18,580.8L1036.30,576.5L1036.43,598.4L1036.56,585.2L1036.68,550.1L1036.81,576.5L1036.93,585.2L1037.06,589.6L1037.19,572.1L1037.31,585.2L1037.44,576.5L1037.57,580.8L1037.69,572.1L1037.82,567.7L1037.95,567.7L1038.07,550.1L1038.20,563.3L1038.33,585.2L1038.45,567.7L1038.58,558.9L1038.71,554.5L1038.83,567.7L1038.96,594.0L1039.09,567.7L1039.21,598.4L1039.34,572.1L1039.47,572.1L1039.59,567.7L1039.72,576.5L1039.84,589.6L1039.97,563.3L1040.10,580.8L1040.22,572.1L1040.35,567.7L1040.48,572.1L1040.60,576.5L1040.73,580.8L1040.86,567.7L1040.98,589.6L1041.11,572.1L1041.24,580.8L1041.36,563.3L1041.49,585.2L1041.62,572.1L1041.74,585.2L1041.87,554.5L1042.00,585.2L1042.12,589.6L1042.25,589.6L1042.37,572.1L1042.50,576.5L1042.63,567.7L1042.75,576.5L1042.88,558.9L1043.01,589.6L1043.13,554.5L1043.26,589.6L1043.39,585.2L1043.51,572.1L1043.64,580.8L1043.77,580.8L1043.89,589.6L1044.02,554.5L1044.15,589.6L1044.27,572.1L1044.40,580.8L1044.53,589.6L1044.65,567.7L1044.78,576.5L1044.90,580.8L1045.03,594.0L1045.16,580.8L1045.28,572.1L1045.41,567.7L1045.54,585.2L1045.66,611.6L1045.79,563.3L1045.92,554.5L1046.04,563.3L1046.17,567.7L1046.30,585.2L1046.42,563.3L1046.55,572.1L1046.68,567.7L1046.80,589.6L1046.93,576.5L1047.06,589.6L1047.18,580.8L1047.31,563.3L1047.43,558.9L1047.56,589.6L1047.69,576.5L1047.81,572.1L1047.94,554.5L1048.07,558.9L1048.19,572.1L1048.32,567.7L1048.45,594.0L1048.57,563.3L1048.70,563.3L1048.83,585.2L1048.95,589.6L1049.08,585.2L1049.21,563.3L1049.33,580.8L1049.46,576.5L1049.59,563.3L1049.71,576.5L1049.84,580.8L1049.96,576.5L1050.09,567.7L1050.22,576.5L1050.34,567.7L1050.47,589.6L1050.60,572.1L1050.72,589.6L1050.85,580.8L1050.98,589.6L1051.10,572.1L1051.23,580.8L1051.36,576.5L1051.48,576.5L1051.61,580.8L1051.74,576.5L1051.86,567.7L1051.99,576.5L1052.12,567.7L1052.24,567.7L1052.37,585.2L1052.49,585.2L1052.62,589.6L1052.75,576.5L1052.87,563.3L1053.00,572.1L1053.13,572.1L1053.25,572.1L1053.38,580.8L1053.51,580.8L1053.63,576.5L1053.76,567.7L1053.89,585.2L1054.01,580.8L1054.14,580.8L1054.27,563.3L1054.39,567.7L1054.52,576.5L1054.64,585.2L1054.77,576.5L1054.90,589.6L1055.02,572.1L1055.15,585.2L1055.28,589.6L1055.40,580.8L1055.53,589.6L1055.66,576.5L1055.78,572.1L1055.91,554.5L1056.04,589.6L1056.16,572.1L1056.29,589.6L1056.42,541.3L1056.54,576.5L1056.67,580.8L1056.80,598.4L1056.92,563.3L1057.05,576.5L1057.17,567.7L1057.30,572.1L1057.43,563.3L1057.55,580.8L1057.68,580.8L1057.81,589.6L1057.93,567.7L1058.06,580.8L1058.19,589.6L1058.31,585.2L1058.44,576.5L1058.57,576.5L1058.69,576.5L1058.82,580.8L1058.95,567.7L1059.07,572.1L1059.20,576.5L1059.33,572.1L1059.45,572.1L1059.58,585.2L1059.70,580.8L1059.83,580.8L1059.96,572.1L1060.08,580.8L1060.21,589.6L1060.34,589.6L1060.46,580.8L1060.59,567.7L1060.72,572.1L1060.84,585.2L1060.97,572.1L1061.10,580.8L1061.22,585.2L1061.35,602.8L1061.48,585.2L1061.60,594.0L1061.73,580.8L1061.86,558.9L1061.98,558.9L1062.11,585.2L1062.24,558.9L1062.36,572.1L1062.49,563.3L1062.61,563.3L1062.74,580.8L1062.87,585.2L1062.99,576.5L1063.12,563.3L1063.25,585.2L1063.37,585.2L1063.50,585.2L1063.63,580.8L1063.75,572.1L1063.88,576.5L1064.01,585.2L1064.13,585.2L1064.26,580.8L1064.39,580.8L1064.51,576.5L1064.64,580.8L1064.77,554.5L1064.89,585.2L1065.02,563.3L1065.14,585.2L1065.27,580.8L1065.40,558.9L1065.52,558.9L1065.65,572.1L1065.78,563.3L1065.90,576.5L1066.03,558.9L1066.16,572.1L1066.28,585.2L1066.41,594.0L1066.54,576.5L1066.66,572.1L1066.79,580.8L1066.92,567.7L1067.04,563.3L1067.17,594.0L1067.30,572.1L1067.42,580.8L1067.55,589.6L1067.67,589.6L1067.80,572.1L1067.93,585.2L1068.05,598.4L1068.18,572.1L1068.31,576.5L1068.43,572.1L1068.56,572.1L1068.69,567.7L1068.81,580.8L1068.94,580.8L1069.07,567.7L1069.19,576.5L1069.32,580.8L1069.45,572.1L1069.57,572.1L1069.70,585.2L1069.83,576.5L1069.95,563.3L1070.08,550.1L1070.20,576.5L1070.33,572.1L1070.46,567.7L1070.58,572.1L1070.71,580.8L1070.84,576.5L1070.96,576.5L1071.09,572.1L1071.22,576.5L1071.34,576.5L1071.47,554.5L1071.60,563.3L1071.72,585.2L1071.85,550.1L1071.98,572.1L1072.10,594.0L1072.23,572.1L1072.36,576.5L1072.48,576.5L1072.61,567.7L1072.73,572.1L1072.86,576.5L1072.99,567.7L1073.11,589.6L1073.24,580.8L1073.37,585.2L1073.49,576.5L1073.62,572.1L1073.75,576.5L1073.87,594.0L1074.00,563.3L1074.13,567.7L1074.25,594.0L1074.38,567.7L1074.51,567.7L1074.63,572.1L1074.76,576.5L1074.88,572.1L1075.01,576.5L1075.14,589.6L1075.26,576.5L1075.39,580.8L1075.52,576.5L1075.64,558.9L1075.77,576.5L1075.90,585.2L1076.02,580.8L1076.15,594.0L1076.28,585.2L1076.40,589.6L1076.53,594.0L1076.66,589.6L1076.78,576.5L1076.91,594.0L1077.04,585.2L1077.16,602.8L1077.29,550.1L1077.41,580.8L1077.54,580.8L1077.67,576.5L1077.79,580.8L1077.92,558.9L1078.05,572.1L1078.17,576.5L1078.30,598.4L1078.43,563.3L1078.55,585.2L1078.68,576.5L1078.81,594.0L1078.93,580.8L1079.06,589.6L1079.19,594.0L1079.31,558.9L1079.44,572.1L1079.57,576.5L1079.69,572.1L1079.82,558.9L1079.95,589.6L1080.07,589.6L1080.20,589.6L1080.32,572.1L1080.45,598.4L1080.58,585.2L1080.70,567.7L1080.83,576.5L1080.96,576.5L1081.08,576.5L1081.21,567.7L1081.34,576.5L1081.46,563.3L1081.59,576.5L1081.72,576.5L1081.84,567.7L1081.97,589.6L1082.10,580.8L1082.22,572.1L1082.35,554.5L1082.48,598.4L1082.60,567.7L1082.73,585.2L1082.85,572.1L1082.98,572.1L1083.11,576.5L1083.23,572.1L1083.36,567.7L1083.49,589.6L1083.61,576.5L1083.74,576.5L1083.87,585.2L1083.99,567.7L1084.12,585.2L1084.25,598.4L1084.37,580.8L1084.50,563.3L1084.63,576.5L1084.75,558.9L1084.88,550.1L1085.01,558.9L1085.13,576.5L1085.26,580.8L1085.38,572.1L1085.51,585.2L1085.64,589.6L1085.76,594.0L1085.89,572.1L1086.02,558.9L1086.14,563.3L1086.27,580.8L1086.40,572.1L1086.52,580.8L1086.65,567.7L1086.78,585.2L1086.90,572.1L1087.03,550.1L1087.16,580.8L1087.28,563.3L1087.41,580.8L1087.54,580.8L1087.66,594.0L1087.79,567.7L1087.91,580.8L1088.04,580.8L1088.17,594.0L1088.29,572.1L1088.42,567.7L1088.55,572.1L1088.67,576.5L1088.80,567.7L1088.93,580.8L1089.05,563.3L1089.18,594.0L1089.31,589.6L1089.43,589.6L1089.56,580.8L1089.69,576.5L1089.81,580.8L1089.94,558.9L1090.07,580.8L1090.19,550.1L1090.32,580.8L1090.44,572.1L1090.57,576.5L1090.70,585.2L1090.82,580.8L1090.95,589.6L1091.08,563.3L1091.20,594.0L1091.33,589.6L1091.46,585.2L1091.58,572.1L1091.71,589.6L1091.84,572.1L1091.96,585.2L1092.09,589.6L1092.22,567.7L1092.34,545.7L1092.47,572.1L1092.60,576.5L1092.72,585.2L1092.85,558.9L1092.97,585.2L1093.10,572.1L1093.23,580.8L1093.35,598.4L1093.48,589.6L1093.61,576.5L1093.73,589.6L1093.86,572.1L1093.99,572.1L1094.11,550.1L1094.24,585.2L1094.37,585.2L1094.49,589.6L1094.62,589.6L1094.75,567.7L1094.87,567.7L1095.00,563.3L1095.12,576.5L1095.25,576.5L1095.38,576.5L1095.50,580.8L1095.63,576.5L1095.76,580.8L1095.88,572.1L1096.01,576.5L1096.14,594.0L1096.26,567.7L1096.39,554.5L1096.52,589.6L1096.64,567.7L1096.77,567.7L1096.90,567.7L1097.02,558.9L1097.15,572.1L1097.28,589.6L1097.40,558.9L1097.53,585.2L1097.65,580.8L1097.78,576.5L1097.91,567.7L1098.03,572.1L1098.16,554.5L1098.29,580.8L1098.41,567.7L1098.54,576.5L1098.67,598.4L1098.79,576.5L1098.92,576.5L1099.05,580.8L1099.17,576.5L1099.30,567.7L1099.43,572.1L1099.55,580.8L1099.68,572.1L1099.81,558.9L1099.93,580.8L1100.06,585.2L1100.18,567.7L1100.31,572.1L1100.44,572.1L1100.56,558.9L1100.69,554.5L1100.82,602.8L1100.94,576.5L1101.07,580.8L1101.20,576.5L1101.32,567.7L1101.45,572.1L1101.58,589.6L1101.70,580.8L1101.83,558.9L1101.96,580.8L1102.08,580.8L1102.21,567.7L1102.34,585.2L1102.46,558.9L1102.59,585.2L1102.72,572.1L1102.84,576.5L1102.97,589.6L1103.09,563.3L1103.22,563.3L1103.35,580.8L1103.47,585.2L1103.60,563.3L1103.73,576.5L1103.85,585.2L1103.98,572.1L1104.11,594.0L1104.23,580.8L1104.36,567.7L1104.49,572.1L1104.61,576.5L1104.74,594.0L1104.87,580.8L1104.99,572.1L1105.12,572.1L1105.25,598.4L1105.37,572.1L1105.50,572.1L1105.62,598.4L1105.75,576.5L1105.88,567.7L1106.00,580.8L1106.13,558.9L1106.26,576.5L1106.38,572.1L1106.51,576.5L1106.64,567.7L1106.76,585.2L1106.89,576.5L1107.02,580.8L1107.14,572.1L1107.27,558.9L1107.40,585.2L1107.52,576.5L1107.65,576.5L1107.78,585.2L1107.90,567.7L1108.03,567.7L1108.15,567.7L1108.28,567.7L1108.41,576.5L1108.53,580.8L1108.66,589.6L1108.79,580.8L1108.91,576.5L1109.04,572.1L1109.17,589.6L1109.29,576.5L1109.42,572.1L1109.55,563.3L1109.67,580.8L1109.80,598.4L1109.93,563.3L1110.05,585.2L1110.18,580.8L1110.31,563.3L1110.43,567.7L1110.56,576.5L1110.68,585.2L1110.81,580.8L1110.94,576.5L1111.06,572.1L1111.19,558.9L1111.32,563.3L1111.44,567.7L1111.57,580.8L1111.70,567.7L1111.82,576.5L1111.95,567.7L1112.08,563.3L1112.20,576.5L1112.33,572.1L1112.46,572.1L1112.58,572.1L1112.71,589.6L1112.84,576.5L1112.96,585.2L1113.09,567.7L1113.21,576.5L1113.34,572.1L1113.47,580.8L1113.59,580.8L1113.72,572.1L1113.85,594.0L1113.97,580.8L1114.10,589.6L1114.23,585.2L1114.35,576.5L1114.48,550.1L1114.61,585.2L1114.73,563.3L1114.86,567.7L1114.99,585.2L1115.11,572.1L1115.24,567.7L1115.37,585.2L1115.49,580.8L1115.62,589.6L1115.74,563.3L1115.87,567.7L1116.00,580.8L1116.12,567.7L1116.25,585.2L1116.38,567.7L1116.50,585.2L1116.63,572.1L1116.76,572.1L1116.88,572.1L1117.01,558.9L1117.14,563.3L1117.26,576.5L1117.39,567.7L1117.52,598.4L1117.64,585.2L1117.77,585.2L1117.89,594.0L1118.02,563.3L1118.15,580.8L1118.27,598.4L1118.40,563.3L1118.53,563.3L1118.65,572.1L1118.78,572.1L1118.91,580.8L1119.03,580.8L1119.16,594.0L1119.29,576.5L1119.41,563.3L1119.54,580.8L1119.67,585.2L1119.79,589.6L1119.92,576.5L1120.05,576.5L1120.17,567.7L1120.30,572.1L1120.42,580.8L1120.55,589.6L1120.68,572.1L1120.80,572.1L1120.93,576.5L1121.06,567.7L1121.18,567.7L1121.31,572.1L1121.44,576.5L1121.56,572.1L1121.69,611.6L1121.82,585.2L1121.94,585.2L1122.07,580.8L1122.20,572.1L1122.32,563.3L1122.45,589.6L1122.58,580.8L1122.70,563.3L1122.83,563.3L1122.95,589.6L1123.08,572.1L1123.21,572.1L1123.33,576.5L1123.46,567.7L1123.59,585.2L1123.71,580.8L1123.84,572.1L1123.97,576.5L1124.09,567.7L1124.22,576.5L1124.35,580.8L1124.47,572.1L1124.60,558.9L1124.73,572.1L1124.85,563.3L1124.98,576.5L1125.11,576.5L1125.23,576.5L1125.36,572.1L1125.49,554.5L1125.61,585.2L1125.74,589.6L1125.86,576.5L1125.99,585.2L1126.12,585.2L1126.24,563.3L1126.37,576.5L1126.50,572.1L1126.62,558.9L1126.75,563.3L1126.88,563.3L1127.00,576.5L1127.13,563.3L1127.26,554.5L1127.38,567.7L1127.51,567.7L1127.64,572.1L1127.76,572.1L1127.89,567.7L1128.02,585.2L1128.14,598.4L1128.27,589.6L1128.39,589.6L1128.52,576.5L1128.65,572.1L1128.77,576.5L1128.90,589.6L1129.03,572.1L1129.15,563.3L1129.28,594.0L1129.41,580.8L1129.53,554.5L1129.66,585.2L1129.79,572.1L1129.91,567.7L1130.04,576.5L1130.17,576.5L1130.29,567.7L1130.42,589.6L1130.55,576.5L1130.67,585.2L1130.80,572.1L1130.92,580.8L1131.05,572.1L1131.18,576.5L1131.30,602.8L1131.43,572.1L1131.56,598.4L1131.68,580.8L1131.81,576.5L1131.94,554.5L1132.06,585.2L1132.19,572.1L1132.32,580.8L1132.44,572.1L1132.57,585.2L1132.70,576.5L1132.82,567.7L1132.95,563.3L1133.08,563.3L1133.20,558.9L1133.33,550.1L1133.45,585.2L1133.58,572.1L1133.71,580.8L1133.83,585.2L1133.96,598.4L1134.09,563.3L1134.21,589.6L1134.34,576.5L1134.47,567.7L1134.59,576.5L1134.72,580.8L1134.85,576.5L1134.97,585.2L1135.10,585.2L1135.23,567.7L1135.35,576.5L1135.48,576.5L1135.61,594.0L1135.73,576.5L1135.86,554.5L1135.98,576.5L1136.11,572.1L1136.24,598.4L1136.36,567.7L1136.49,585.2L1136.62,558.9L1136.74,563.3L1136.87,563.3L1137.00,563.3L1137.12,572.1L1137.25,589.6L1137.38,585.2L1137.50,572.1L1137.63,558.9L1137.76,563.3L1137.88,607.2L1138.01,598.4L1138.13,580.8L1138.26,580.8L1138.39,580.8L1138.51,567.7L1138.64,567.7L1138.77,580.8L1138.89,572.1L1139.02,572.1L1139.15,585.2L1139.27,589.6L1139.40,580.8L1139.53,580.8L1139.65,580.8L1139.78,580.8L1139.91,580.8L1140.03,589.6L1140.16,580.8L1140.29,576.5L1140.41,598.4L1140.54,576.5L1140.66,554.5L1140.79,554.5L1140.92,563.3L1141.04,572.1L1141.17,572.1L1141.30,563.3L1141.42,576.5L1141.55,563.3L1141.68,572.1L1141.80,572.1L1141.93,563.3L1142.06,580.8L1142.18,563.3L1142.31,576.5L1142.44,576.5L1142.56,580.8L1142.69,580.8L1142.82,576.5L1142.94,563.3L1143.07,572.1L1143.20,558.9L1143.32,580.8L1143.45,576.5L1143.57,567.7L1143.70,580.8L1143.83,585.2L1143.95,576.5L1144.08,545.7L1144.21,572.1L1144.33,567.7L1144.46,589.6L1144.59,580.8L1144.71,576.5L1144.84,576.5L1144.97,580.8L1145.09,580.8L1145.22,563.3L1145.35,576.5L1145.47,567.7L1145.60,589.6L1145.73,567.7L1145.85,576.5L1145.98,580.8L1146.10,572.1L1146.23,563.3L1146.36,567.7L1146.48,558.9L1146.61,585.2L1146.74,585.2L1146.86,572.1L1146.99,580.8L1147.12,576.5L1147.24,598.4L1147.37,576.5L1147.50,576.5L1147.62,572.1L1147.75,580.8L1147.88,589.6L1148.00,572.1L1148.13,545.7L1148.26,563.3L1148.38,594.0L1148.51,580.8L1148.63,558.9L1148.76,594.0L1148.89,572.1L1149.01,567.7L1149.14,594.0L1149.27,576.5L1149.39,572.1L1149.52,576.5L1149.65,576.5L1149.77,572.1L1149.90,572.1L1150.03,576.5L1150.15,585.2L1150.28,576.5L1150.41,572.1L1150.53,585.2L1150.66,589.6L1150.79,576.5L1150.91,580.8L1151.04,576.5L1151.16,580.8L1151.29,585.2L1151.42,550.1L1151.54,585.2L1151.67,567.7L1151.80,580.8L1151.92,545.7L1152.05,567.7L1152.18,594.0L1152.30,585.2L1152.43,572.1L1152.56,550.1L1152.68,572.1L1152.81,585.2L1152.94,580.8L1153.06,563.3L1153.19,576.5L1153.32,567.7L1153.44,567.7L1153.57,585.2L1153.69,576.5L1153.82,589.6L1153.95,576.5L1154.07,585.2L1154.20,576.5L1154.33,589.6L1154.45,572.1L1154.58,572.1L1154.71,580.8L1154.83,558.9L1154.96,589.6L1155.09,585.2L1155.21,580.8L1155.34,572.1L1155.47,567.7L1155.59,563.3L1155.72,567.7L1155.85,563.3L1155.97,572.1L1156.10,589.6L1156.22,563.3L1156.35,567.7L1156.48,563.3L1156.60,580.8L1156.73,563.3L1156.86,572.1L1156.98,572.1L1157.11,567.7L1157.24,580.8L1157.36,576.5L1157.49,589.6L1157.62,585.2L1157.74,572.1L1157.87,594.0L1158.00,558.9L1158.12,580.8L1158.25,576.5L1158.38,580.8L1158.50,585.2L1158.63,589.6L1158.75,585.2L1158.88,585.2L1159.01,558.9L1159.13,558.9L1159.26,567.7L1159.39,576.5L1159.51,576.5L1159.64,558.9L1159.77,567.7L1159.89,567.7L1160.02,576.5L1160.15,589.6L1160.27,554.5L1160.40,580.8L1160.53,567.7L1160.65,576.5L1160.78,576.5L1160.90,576.5L1161.03,589.6L1161.16,580.8L1161.28,585.2L1161.41,585.2L1161.54,558.9L1161.66,572.1L1161.79,585.2L1161.92,563.3L1162.04,576.5L1162.17,572.1L1162.30,572.1L1162.42,585.2L1162.55,580.8L1162.68,563.3L1162.80,585.2L1162.93,572.1L1163.06,563.3L1163.18,572.1L1163.31,580.8L1163.43,576.5L1163.56,572.1L1163.69,572.1L1163.81,589.6L1163.94,563.3L1164.07,611.6L1164.19,563.3L1164.32,567.7L1164.45,554.5L1164.57,563.3L1164.70,563.3L1164.83,576.5L1164.95,567.7L1165.08,550.1L1165.21,598.4L1165.33,576.5L1165.46,580.8L1165.59,594.0L1165.71,558.9L1165.84,567.7L1165.97,567.7L1166.09,572.1L1166.22,567.7L1166.34,594.0L1166.47,580.8L1166.60,585.2L1166.72,576.5L1166.85,558.9L1166.98,572.1L1167.10,598.4L1167.23,567.7L1167.36,594.0L1167.48,558.9L1167.61,576.5L1167.74,572.1L1167.86,589.6L1167.99,563.3L1168.12,576.5L1168.24,580.8L1168.37,558.9L1168.50,589.6L1168.62,558.9L1168.75,572.1L1168.87,585.2L1169.00,563.3L1169.13,580.8L1169.25,576.5L1169.38,572.1L1169.51,572.1L1169.63,576.5L1169.76,572.1L1169.89,594.0L1170.01,576.5L1170.14,585.2L1170.27,558.9L1170.39,576.5L1170.52,550.1L1170.65,567.7L1170.77,594.0L1170.90,576.5L1171.03,563.3L1171.15,589.6L1171.28,580.8L1171.40,572.1L1171.53,572.1L1171.66,567.7L1171.78,572.1L1171.91,572.1L1172.04,567.7L1172.16,558.9L1172.29,572.1L1172.42,567.7L1172.54,598.4L1172.67,576.5L1172.80,563.3L1172.92,563.3L1173.05,580.8L1173.18,585.2L1173.30,576.5L1173.43,572.1L1173.56,558.9L1173.68,572.1L1173.81,567.7L1173.93,563.3L1174.06,563.3L1174.19,572.1L1174.31,598.4L1174.44,567.7L1174.57,585.2L1174.69,572.1L1174.82,572.1L1174.95,572.1L1175.07,563.3L1175.20,576.5L1175.33,594.0L1175.45,576.5L1175.58,580.8L1175.71,576.5L1175.83,572.1L1175.96,589.6L1176.09,580.8L1176.21,567.7L1176.34,563.3L1176.46,585.2L1176.59,589.6L1176.72,576.5L1176.84,589.6L1176.97,580.8L1177.10,580.8L1177.22,572.1L1177.35,594.0L1177.48,572.1L1177.60,572.1L1177.73,589.6L1177.86,567.7L1177.98,567.7L1178.11,589.6L1178.24,589.6L1178.36,576.5L1178.49,558.9L1178.62,576.5L1178.74,563.3L1178.87,580.8L1178.99,572.1L1179.12,589.6L1179.25,572.1L1179.37,572.1L1179.50,567.7L1179.63,580.8L1179.75,585.2L1179.88,572.1L1180.01,576.5L1180.13,585.2L1180.26,572.1L1180.39,563.3L1180.51,594.0L1180.64,567.7L1180.77,572.1L1180.89,576.5L1181.02,580.8L1181.14,576.5L1181.27,550.1L1181.40,580.8L1181.52,567.7L1181.65,585.2L1181.78,567.7L1181.90,563.3L1182.03,589.6L1182.16,567.7L1182.28,567.7L1182.41,572.1L1182.54,558.9L1182.66,563.3L1182.79,580.8L1182.92,585.2L1183.04,572.1L1183.17,567.7L1183.30,580.8"/>
<rect x="911" y="517" width="274" height="120" fill="none" stroke="#262626" stroke-width="2"/>
<line x1="904.20" y1="603.00" x2="911.00" y2="603.00" stroke="#262626" stroke-width="2.0"/>
<text x="877.50" y="606.40" font-size="10.53" textLength="18.60" lengthAdjust="spacingAndGlyphs">240</text>
<line x1="904.20" y1="559.00" x2="911.00" y2="559.00" stroke="#262626" stroke-width="2.0"/>
<text x="877.50" y="562.50" font-size="10.53" textLength="18.60" lengthAdjust="spacingAndGlyphs">250</text>
<line x1="912.00" y1="636.90" x2="912.00" y2="643.70" stroke="#262626" stroke-width="2.0"/>
<text x="908.76" y="660.40" font-size="10.53" textLength="5.82" lengthAdjust="spacingAndGlyphs">0</text>
<line x1="975.00" y1="636.90" x2="975.00" y2="643.70" stroke="#262626" stroke-width="2.0"/>
<text x="965.76" y="660.40" font-size="10.53" textLength="18.48" lengthAdjust="spacingAndGlyphs">500</text>
<line x1="1038.00" y1="636.90" x2="1038.00" y2="643.70" stroke="#262626" stroke-width="2.0"/>
<text x="1025.80" y="660.40" font-size="10.53" textLength="24.80" lengthAdjust="spacingAndGlyphs">1000</text>
<line x1="1101.00" y1="636.90" x2="1101.00" y2="643.70" stroke="#262626" stroke-width="2.0"/>
<text x="1089.05" y="660.40" font-size="10.53" textLength="24.80" lengthAdjust="spacingAndGlyphs">1500</text>
<line x1="1165.00" y1="636.90" x2="1165.00" y2="643.70" stroke="#262626" stroke-width="2.0"/>
<text x="1152.23" y="660.40" font-size="10.53" textLength="24.88" lengthAdjust="spacingAndGlyphs">2000</text>
<text x="1044.17" y="678.00" font-size="11.06" textLength="7.03" lengthAdjust="spacingAndGlyphs">X</text>
<text transform="translate(866.24,594.77) rotate(-90)" x="0" y="0" font-size="11.06" textLength="34.76" lengthAdjust="spacingAndGlyphs">counts</text>
<text transform="translate(1193.76,556.11) rotate(90)" x="0" y="0" font-size="11.06" textLength="38.52" lengthAdjust="spacingAndGlyphs">cut in x</text>
<rect x="1108.8" y="519.80" width="72.9" height="16.1" rx="2.5" fill="#fff" fill-opacity="0.8" stroke="#d5d5d5" stroke-width="1"/>
<line x1="1111.20" y1="528.00" x2="1133.90" y2="528.00" stroke="#0000ff" stroke-width="1.5"/>
<text x="1137.24" y="530.60" font-size="10.79" textLength="40.11" lengthAdjust="spacingAndGlyphs">y=2048</text>
<path fill="none" stroke="#0000ff" stroke-width="1.7" d="M911.00,743.9L911.07,748.3L911.13,748.3L911.20,761.4L911.27,757.0L911.33,752.7L911.40,757.0L911.47,735.1L911.53,761.4L911.60,748.3L911.67,735.1L911.73,743.9L911.80,739.5L911.87,752.7L911.94,739.5L912.00,743.9L912.07,730.7L912.14,748.3L912.20,743.9L912.27,761.4L912.34,743.9L912.40,757.0L912.47,735.1L912.54,730.7L912.60,757.0L912.67,748.3L912.74,743.9L912.80,752.7L912.87,757.0L912.94,743.9L913.00,752.7L913.07,748.3L913.14,735.1L913.20,726.3L913.27,757.0L913.34,721.9L913.40,761.4L913.47,748.3L913.54,743.9L913.61,730.7L913.67,730.7L913.74,739.5L913.81,739.5L913.87,730.7L913.94,748.3L914.01,739.5L914.07,765.8L914.14,748.3L914.21,739.5L914.27,752.7L914.34,752.7L914.41,743.9L914.47,743.9L914.54,748.3L914.61,748.3L914.67,730.7L914.74,748.3L914.81,757.0L914.87,743.9L914.94,743.9L915.01,748.3L915.07,752.7L915.14,761.4L915.21,739.5L915.28,743.9L915.34,765.8L915.41,743.9L915.48,730.7L915.54,765.8L915.61,739.5L915.68,757.0L915.74,739.5L915.81,748.3L915.88,735.1L915.94,752.7L916.01,748.3L916.08,743.9L916.14,743.9L916.21,721.9L916.28,748.3L916.34,752.7L916.41,743.9L916.48,743.9L916.54,761.4L916.61,748.3L916.68,748.3L916.74,735.1L916.81,735.1L916.88,743.9L916.95,739.5L917.01,757.0L917.08,743.9L917.15,726.3L917.21,761.4L917.28,761.4L917.35,748.3L917.41,752.7L917.48,748.3L917.55,752.7L917.61,739.5L917.68,752.7L917.75,717.5L917.81,748.3L917.88,752.7L917.95,748.3L918.01,748.3L918.08,752.7L918.15,748.3L918.21,748.3L918.28,735.1L918.35,748.3L918.41,752.7L918.48,761.4L918.55,743.9L918.62,743.9L918.68,743.9L918.75,730.7L918.82,752.7L918.88,743.9L918.95,761.4L919.02,765.8L919.08,743.9L919.15,770.2L919.22,743.9L919.28,739.5L919.35,752.7L919.42,748.3L919.48,735.1L919.55,761.4L919.62,757.0L919.68,739.5L919.75,748.3L919.82,730.7L919.88,730.7L919.95,739.5L920.02,739.5L920.08,752.7L920.15,757.0L920.22,770.2L920.29,752.7L920.35,761.4L920.42,748.3L920.49,761.4L920.55,743.9L920.62,743.9L920.69,761.4L920.75,735.1L920.82,743.9L920.89,757.0L920.95,748.3L921.02,730.7L921.09,752.7L921.15,757.0L921.22,730.7L921.29,743.9L921.35,752.7L921.42,761.4L921.49,770.2L921.55,761.4L921.62,743.9L921.69,743.9L921.75,748.3L921.82,761.4L921.89,761.4L921.96,739.5L922.02,761.4L922.09,752.7L922.16,748.3L922.22,752.7L922.29,752.7L922.36,752.7L922.42,743.9L922.49,735.1L922.56,748.3L922.62,748.3L922.69,757.0L922.76,748.3L922.82,735.1L922.89,748.3L922.96,752.7L923.02,757.0L923.09,739.5L923.16,743.9L923.22,743.9L923.29,748.3L923.36,743.9L923.42,757.0L923.49,739.5L923.56,739.5L923.63,752.7L923.69,765.8L923.76,752.7L923.83,752.7L923.89,735.1L923.96,761.4L924.03,735.1L924.09,757.0L924.16,739.5L924.23,752.7L924.29,752.7L924.36,743.9L924.43,735.1L924.49,743.9L924.56,757.0L924.63,735.1L924.69,739.5L924.76,752.7L924.83,726.3L924.89,761.4L924.96,765.8L925.03,748.3L925.09,739.5L925.16,757.0L925.23,735.1L925.30,752.7L925.36,752.7L925.43,730.7L925.50,761.4L925.56,730.7L925.63,752.7L925.70,730.7L925.76,757.0L925.83,757.0L925.90,757.0L925.96,735.1L926.03,726.3L926.10,743.9L926.16,752.7L926.23,739.5L926.30,743.9L926.36,735.1L926.43,757.0L926.50,743.9L926.56,726.3L926.63,748.3L926.70,752.7L926.76,743.9L926.83,743.9L926.90,752.7L926.97,743.9L927.03,743.9L927.10,735.1L927.17,748.3L927.23,748.3L927.30,761.4L927.37,739.5L927.43,739.5L927.50,752.7L927.57,774.6L927.63,726.3L927.70,752.7L927.77,752.7L927.83,757.0L927.90,757.0L927.97,739.5L928.03,757.0L928.10,743.9L928.17,743.9L928.23,735.1L928.30,752.7L928.37,752.7L928.43,730.7L928.50,748.3L928.57,743.9L928.64,726.3L928.70,730.7L928.77,739.5L928.84,752.7L928.90,739.5L928.97,739.5L929.04,730.7L929.10,757.0L929.17,743.9L929.24,752.7L929.30,743.9L929.37,743.9L929.44,743.9L929.50,739.5L929.57,735.1L929.64,757.0L929.70,743.9L929.77,743.9L929.84,743.9L929.90,739.5L929.97,757.0L930.04,743.9L930.10,757.0L930.17,752.7L930.24,739.5L930.31,748.3L930.37,748.3L930.44,748.3L930.51,743.9L930.57,735.1L930.64,748.3L930.71,761.4L930.77,743.9L930.84,765.8L930.91,739.5L930.97,743.9L931.04,752.7L931.11,748.3L931.17,735.1L931.24,752.7L931.31,739.5L931.37,761.4L931.44,757.0L931.51,752.7L931.57,761.4L931.64,743.9L931.71,748.3L931.77,726.3L931.84,757.0L931.91,748.3L931.98,739.5L932.04,730.7L932.11,757.0L932.18,743.9L932.24,748.3L932.31,739.5L932.38,761.4L932.44,743.9L932.51,761.4L932.58,757.0L932.64,757.0L932.71,765.8L932.78,743.9L932.84,730.7L932.91,743.9L932.98,752.7L933.04,748.3L933.11,730.7L933.18,761.4L933.24,739.5L933.31,743.9L933.38,743.9L933.44,735.1L933.51,739.5L933.58,765.8L933.65,748.3L933.71,752.7L933.78,721.9L933.85,752.7L933.91,765.8L933.98,752.7L934.05,748.3L934.11,748.3L934.18,752.7L934.25,770.2L934.31,735.1L934.38,752.7L934.45,743.9L934.51,743.9L934.58,752.7L934.65,730.7L934.71,739.5L934.78,735.1L934.85,739.5L934.91,761.4L934.98,752.7L935.05,735.1L935.11,743.9L935.18,752.7L935.25,735.1L935.32,743.9L935.38,748.3L935.45,752.7L935.52,757.0L935.58,752.7L935.65,761.4L935.72,757.0L935.78,726.3L935.85,743.9L935.92,761.4L935.98,739.5L936.05,765.8L936.12,735.1L936.18,743.9L936.25,765.8L936.32,779.0L936.38,735.1L936.45,739.5L936.52,761.4L936.58,739.5L936.65,770.2L936.72,761.4L936.78,752.7L936.85,726.3L936.92,743.9L936.99,765.8L937.05,735.1L937.12,739.5L937.19,748.3L937.25,743.9L937.32,748.3L937.39,730.7L937.45,757.0L937.52,748.3L937.59,757.0L937.65,743.9L937.72,761.4L937.79,752.7L937.85,730.7L937.92,752.7L937.99,752.7L938.05,748.3L938.12,752.7L938.19,774.6L938.25,748.3L938.32,735.1L938.39,748.3L938.45,739.5L938.52,739.5L938.59,757.0L938.66,730.7L938.72,770.2L938.79,748.3L938.86,752.7L938.92,739.5L938.99,757.0L939.06,757.0L939.12,748.3L939.19,757.0L939.26,739.5L939.32,761.4L939.39,765.8L939.46,752.7L939.52,757.0L939.59,761.4L939.66,739.5L939.72,757.0L939.79,735.1L939.86,752.7L939.92,757.0L939.99,730.7L940.06,748.3L940.12,757.0L940.19,752.7L940.26,735.1L940.33,757.0L940.39,735.1L940.46,743.9L940.53,757.0L940.59,735.1L940.66,743.9L940.73,752.7L940.79,765.8L940.86,735.1L940.93,743.9L940.99,748.3L941.06,739.5L941.13,743.9L941.19,726.3L941.26,748.3L941.33,743.9L941.39,735.1L941.46,739.5L941.53,757.0L941.59,748.3L941.66,735.1L941.73,730.7L941.79,770.2L941.86,739.5L941.93,761.4L942.00,743.9L942.06,726.3L942.13,739.5L942.20,739.5L942.26,743.9L942.33,739.5L942.40,739.5L942.46,757.0L942.53,743.9L942.60,730.7L942.66,743.9L942.73,752.7L942.80,743.9L942.86,748.3L942.93,757.0L943.00,752.7L943.06,735.1L943.13,730.7L943.20,743.9L943.26,748.3L943.33,730.7L943.40,739.5L943.46,748.3L943.53,743.9L943.60,752.7L943.67,743.9L943.73,743.9L943.80,743.9L943.87,743.9L943.93,739.5L944.00,743.9L944.07,761.4L944.13,743.9L944.20,748.3L944.27,743.9L944.33,757.0L944.40,730.7L944.47,752.7L944.53,748.3L944.60,752.7L944.67,730.7L944.73,743.9L944.80,748.3L944.87,752.7L944.93,752.7L945.00,757.0L945.07,765.8L945.13,765.8L945.20,739.5L945.27,752.7L945.34,752.7L945.40,735.1L945.47,726.3L945.54,735.1L945.60,743.9L945.67,739.5L945.74,757.0L945.80,743.9L945.87,757.0L945.94,726.3L946.00,735.1L946.07,721.9L946.14,752.7L946.20,757.0L946.27,743.9L946.34,739.5L946.40,730.7L946.47,735.1L946.54,752.7L946.60,757.0L946.67,752.7L946.74,735.1L946.80,752.7L946.87,743.9L946.94,757.0L947.01,739.5L947.07,757.0L947.14,748.3L947.21,726.3L947.27,752.7L947.34,743.9L947.41,743.9L947.47,735.1L947.54,748.3L947.61,748.3L947.67,748.3L947.74,748.3L947.81,739.5L947.87,748.3L947.94,739.5L948.01,748.3L948.07,735.1L948.14,743.9L948.21,774.6L948.27,748.3L948.34,735.1L948.41,748.3L948.47,743.9L948.54,739.5L948.61,752.7L948.68,757.0L948.74,748.3L948.81,743.9L948.88,730.7L948.94,779.0L949.01,735.1L949.08,743.9L949.14,748.3L949.21,739.5L949.28,739.5L949.34,743.9L949.41,730.7L949.48,735.1L949.54,752.7L949.61,748.3L949.68,765.8L949.74,770.2L949.81,757.0L949.88,748.3L949.94,739.5L950.01,765.8L950.08,735.1L950.14,743.9L950.21,739.5L950.28,757.0L950.35,757.0L950.41,765.8L950.48,726.3L950.55,743.9L950.61,748.3L950.68,743.9L950.75,735.1L950.81,748.3L950.88,752.7L950.95,743.9L951.01,757.0L951.08,748.3L951.15,748.3L951.21,761.4L951.28,761.4L951.35,730.7L951.41,752.7L951.48,739.5L951.55,748.3L951.61,743.9L951.68,765.8L951.75,748.3L951.81,743.9L951.88,743.9L951.95,748.3L952.02,752.7L952.08,757.0L952.15,735.1L952.22,757.0L952.28,748.3L952.35,739.5L952.42,752.7L952.48,761.4L952.55,721.9L952.62,748.3L952.68,748.3L952.75,730.7L952.82,735.1L952.88,735.1L952.95,752.7L953.02,748.3L953.08,730.7L953.15,739.5L953.22,752.7L953.28,721.9L953.35,735.1L953.42,743.9L953.48,752.7L953.55,757.0L953.62,779.0L953.69,770.2L953.75,735.1L953.82,739.5L953.89,752.7L953.95,748.3L954.02,752.7L954.09,743.9L954.15,752.7L954.22,757.0L954.29,748.3L954.35,743.9L954.42,748.3L954.49,748.3L954.55,739.5L954.62,739.5L954.69,748.3L954.75,752.7L954.82,743.9L954.89,743.9L954.95,761.4L955.02,765.8L955.09,735.1L955.15,726.3L955.22,735.1L955.29,739.5L955.36,748.3L955.42,730.7L955.49,752.7L955.56,730.7L955.62,743.9L955.69,748.3L955.76,735.1L955.82,748.3L955.89,730.7L955.96,770.2L956.02,726.3L956.09,739.5L956.16,743.9L956.22,752.7L956.29,735.1L956.36,770.2L956.42,761.4L956.49,761.4L956.56,743.9L956.62,726.3L956.69,752.7L956.76,752.7L956.82,761.4L956.89,739.5L956.96,735.1L957.03,761.4L957.09,743.9L957.16,748.3L957.23,752.7L957.29,743.9L957.36,726.3L957.43,765.8L957.49,743.9L957.56,752.7L957.63,748.3L957.69,752.7L957.76,761.4L957.83,739.5L957.89,748.3L957.96,748.3L958.03,739.5L958.09,752.7L958.16,757.0L958.23,748.3L958.29,765.8L958.36,752.7L958.43,739.5L958.49,748.3L958.56,739.5L958.63,748.3L958.70,770.2L958.76,743.9L958.83,757.0L958.90,739.5L958.96,743.9L959.03,752.7L959.10,743.9L959.16,739.5L959.23,752.7L959.30,748.3L959.36,743.9L959.43,761.4L959.50,770.2L959.56,730.7L959.63,739.5L959.70,743.9L959.76,748.3L959.83,748.3L959.90,752.7L959.96,748.3L960.03,761.4L960.10,743.9L960.16,752.7L960.23,743.9L960.30,748.3L960.37,730.7L960.43,752.7L960.50,757.0L960.57,726.3L960.63,748.3L960.70,739.5L960.77,752.7L960.83,739.5L960.90,752.7L960.97,748.3L961.03,743.9L961.10,739.5L961.17,721.9L961.23,761.4L961.30,730.7L961.37,752.7L961.43,757.0L961.50,748.3L961.57,735.1L961.63,748.3L961.70,735.1L961.77,757.0L961.83,748.3L961.90,735.1L961.97,748.3L962.04,743.9L962.10,761.4L962.17,765.8L962.24,739.5L962.30,743.9L962.37,748.3L962.44,761.4L962.50,761.4L962.57,726.3L962.64,743.9L962.70,735.1L962.77,770.2L962.84,752.7L962.90,743.9L962.97,748.3L963.04,735.1L963.10,743.9L963.17,748.3L963.24,743.9L963.30,761.4L963.37,735.1L963.44,757.0L963.50,752.7L963.57,743.9L963.64,721.9L963.71,748.3L963.77,748.3L963.84,743.9L963.91,765.8L963.97,748.3L964.04,739.5L964.11,765.8L964.17,739.5L964.24,752.7L964.31,726.3L964.37,770.2L964.44,748.3L964.51,739.5L964.57,748.3L964.64,748.3L964.71,739.5L964.77,748.3L964.84,739.5L964.91,726.3L964.97,757.0L965.04,748.3L965.11,743.9L965.17,739.5L965.24,757.0L965.31,761.4L965.38,748.3L965.44,748.3L965.51,739.5L965.58,726.3L965.64,748.3L965.71,739.5L965.78,752.7L965.84,761.4L965.91,752.7L965.98,761.4L966.04,735.1L966.11,748.3L966.18,743.9L966.24,761.4L966.31,752.7L966.38,752.7L966.44,761.4L966.51,748.3L966.58,743.9L966.64,752.7L966.71,752.7L966.78,739.5L966.84,739.5L966.91,752.7L966.98,752.7L967.05,757.0L967.11,730.7L967.18,743.9L967.25,752.7L967.31,757.0L967.38,739.5L967.45,743.9L967.51,743.9L967.58,739.5L967.65,739.5L967.71,761.4L967.78,757.0L967.85,748.3L967.91,748.3L967.98,757.0L968.05,748.3L968.11,757.0L968.18,735.1L968.25,743.9L968.31,743.9L968.38,752.7L968.45,739.5L968.51,739.5L968.58,774.6L968.65,787.8L968.72,743.9L968.78,748.3L968.85,752.7L968.92,757.0L968.98,757.0L969.05,748.3L969.12,735.1L969.18,739.5L969.25,761.4L969.32,770.2L969.38,739.5L969.45,757.0L969.52,748.3L969.58,761.4L969.65,761.4L969.72,739.5L969.78,735.1L969.85,730.7L969.92,735.1L969.98,743.9L970.05,743.9L970.12,739.5L970.18,752.7L970.25,743.9L970.32,743.9L970.39,743.9L970.45,743.9L970.52,743.9L970.59,748.3L970.65,761.4L970.72,730.7L970.79,743.9L970.85,739.5L970.92,748.3L970.99,757.0L971.05,748.3L971.12,730.7L971.19,743.9L971.25,761.4L971.32,743.9L971.39,757.0L971.45,739.5L971.52,739.5L971.59,770.2L971.65,739.5L971.72,739.5L971.79,757.0L971.85,743.9L971.92,752.7L971.99,726.3L972.06,743.9L972.12,743.9L972.19,743.9L972.26,743.9L972.32,739.5L972.39,752.7L972.46,748.3L972.52,752.7L972.59,735.1L972.66,739.5L972.72,739.5L972.79,752.7L972.86,748.3L972.92,743.9L972.99,735.1L973.06,730.7L973.12,743.9L973.19,730.7L973.26,735.1L973.32,726.3L973.39,739.5L973.46,752.7L973.52,735.1L973.59,739.5L973.66,752.7L973.73,752.7L973.79,739.5L973.86,735.1L973.93,743.9L973.99,739.5L974.06,735.1L974.13,743.9L974.19,739.5L974.26,739.5L974.33,739.5L974.39,748.3L974.46,748.3L974.53,743.9L974.59,739.5L974.66,757.0L974.73,735.1L974.79,752.7L974.86,735.1L974.93,761.4L974.99,739.5L975.06,743.9L975.13,748.3L975.19,748.3L975.26,748.3L975.33,770.2L975.40,752.7L975.46,757.0L975.53,752.7L975.60,730.7L975.66,739.5L975.73,748.3L975.80,748.3L975.86,752.7L975.93,765.8L976.00,757.0L976.06,757.0L976.13,739.5L976.20,757.0L976.26,735.1L976.33,735.1L976.40,743.9L976.46,761.4L976.53,739.5L976.60,770.2L976.66,757.0L976.73,743.9L976.80,757.0L976.86,739.5L976.93,735.1L977.00,752.7L977.07,713.1L977.13,757.0L977.20,739.5L977.27,739.5L977.33,761.4L977.40,748.3L977.47,748.3L977.53,752.7L977.60,757.0L977.67,761.4L977.73,752.7L977.80,726.3L977.87,730.7L977.93,761.4L978.00,761.4L978.07,761.4L978.13,765.8L978.20,752.7L978.27,743.9L978.33,761.4L978.40,752.7L978.47,748.3L978.53,743.9L978.60,743.9L978.67,730.7L978.74,770.2L978.80,739.5L978.87,739.5L978.94,717.5L979.00,752.7L979.07,748.3L979.14,730.7L979.20,757.0L979.27,743.9L979.34,743.9L979.40,748.3L979.47,743.9L979.54,761.4L979.60,730.7L979.67,748.3L979.74,761.4L979.80,743.9L979.87,761.4L979.94,765.8L980.00,739.5L980.07,739.5L980.14,757.0L980.20,739.5L980.27,752.7L980.34,743.9L980.41,735.1L980.47,748.3L980.54,752.7L980.61,752.7L980.67,743.9L980.74,743.9L980.81,765.8L980.87,752.7L980.94,752.7L981.01,739.5L981.07,752.7L981.14,757.0L981.21,752.7L981.27,748.3L981.34,752.7L981.41,757.0L981.47,739.5L981.54,752.7L981.61,748.3L981.67,752.7L981.74,770.2L981.81,726.3L981.87,774.6L981.94,748.3L982.01,752.7L982.08,739.5L982.14,757.0L982.21,748.3L982.28,739.5L982.34,739.5L982.41,748.3L982.48,748.3L982.54,752.7L982.61,752.7L982.68,770.2L982.74,752.7L982.81,735.1L982.88,735.1L982.94,761.4L983.01,743.9L983.08,726.3L983.14,757.0L983.21,743.9L983.28,739.5L983.34,739.5L983.41,730.7L983.48,743.9L983.54,757.0L983.61,757.0L983.68,730.7L983.75,743.9L983.81,752.7L983.88,748.3L983.95,743.9L984.01,735.1L984.08,748.3L984.15,748.3L984.21,774.6L984.28,735.1L984.35,743.9L984.41,757.0L984.48,735.1L984.55,721.9L984.61,743.9L984.68,752.7L984.75,717.5L984.81,739.5L984.88,739.5L984.95,739.5L985.01,721.9L985.08,743.9L985.15,748.3L985.21,739.5L985.28,765.8L985.35,748.3L985.42,752.7L985.48,743.9L985.55,743.9L985.62,752.7L985.68,735.1L985.75,748.3L985.82,739.5L985.88,735.1L985.95,748.3L986.02,752.7L986.08,752.7L986.15,735.1L986.22,748.3L986.28,730.7L986.35,735.1L986.42,717.5L986.48,726.3L986.55,748.3L986.62,748.3L986.68,761.4L986.75,752.7L986.82,726.3L986.88,748.3L986.95,752.7L987.02,735.1L987.09,752.7L987.15,730.7L987.22,748.3L987.29,748.3L987.35,739.5L987.42,748.3L987.49,739.5L987.55,735.1L987.62,752.7L987.69,739.5L987.75,757.0L987.82,761.4L987.89,748.3L987.95,735.1L988.02,748.3L988.09,743.9L988.15,735.1L988.22,739.5L988.29,757.0L988.35,743.9L988.42,721.9L988.49,765.8L988.55,761.4L988.62,743.9L988.69,748.3L988.76,748.3L988.82,743.9L988.89,757.0L988.96,761.4L989.02,770.2L989.09,748.3L989.16,743.9L989.22,739.5L989.29,752.7L989.36,748.3L989.42,748.3L989.49,761.4L989.56,752.7L989.62,739.5L989.69,739.5L989.76,721.9L989.82,739.5L989.89,752.7L989.96,735.1L990.02,761.4L990.09,748.3L990.16,761.4L990.22,735.1L990.29,752.7L990.36,761.4L990.43,743.9L990.49,743.9L990.56,752.7L990.63,748.3L990.69,748.3L990.76,765.8L990.83,743.9L990.89,739.5L990.96,743.9L991.03,743.9L991.09,739.5L991.16,748.3L991.23,757.0L991.29,726.3L991.36,743.9L991.43,761.4L991.49,752.7L991.56,757.0L991.63,735.1L991.69,739.5L991.76,757.0L991.83,765.8L991.89,752.7L991.96,739.5L992.03,761.4L992.10,752.7L992.16,757.0L992.23,743.9L992.30,752.7L992.36,748.3L992.43,752.7L992.50,743.9L992.56,757.0L992.63,735.1L992.70,730.7L992.76,739.5L992.83,730.7L992.90,743.9L992.96,757.0L993.03,743.9L993.10,721.9L993.16,752.7L993.23,735.1L993.30,735.1L993.36,774.6L993.43,748.3L993.50,743.9L993.56,743.9L993.63,752.7L993.70,739.5L993.77,752.7L993.83,748.3L993.90,735.1L993.97,752.7L994.03,748.3L994.10,743.9L994.17,739.5L994.23,752.7L994.30,739.5L994.37,735.1L994.43,752.7L994.50,752.7L994.57,739.5L994.63,743.9L994.70,757.0L994.77,752.7L994.83,735.1L994.90,743.9L994.97,748.3L995.03,748.3L995.10,735.1L995.17,748.3L995.23,757.0L995.30,748.3L995.37,761.4L995.44,743.9L995.50,743.9L995.57,743.9L995.64,752.7L995.70,761.4L995.77,752.7L995.84,735.1L995.90,739.5L995.97,761.4L996.04,761.4L996.10,748.3L996.17,748.3L996.24,748.3L996.30,748.3L996.37,752.7L996.44,739.5L996.50,757.0L996.57,752.7L996.64,752.7L996.70,757.0L996.77,726.3L996.84,743.9L996.90,752.7L996.97,748.3L997.04,748.3L997.11,748.3L997.17,757.0L997.24,748.3L997.31,726.3L997.37,752.7L997.44,743.9L997.51,721.9L997.57,752.7L997.64,752.7L997.71,761.4L997.77,726.3L997.84,748.3L997.91,752.7L997.97,752.7L998.04,739.5L998.11,752.7L998.17,730.7L998.24,735.1L998.31,743.9L998.37,748.3L998.44,717.5L998.51,739.5L998.57,739.5L998.64,752.7L998.71,743.9L998.78,735.1L998.84,761.4L998.91,757.0L998.98,735.1L999.04,748.3L999.11,757.0L999.18,735.1L999.24,748.3L999.31,757.0L999.38,743.9L999.44,748.3L999.51,752.7L999.58,748.3L999.64,748.3L999.71,739.5L999.78,752.7L999.84,748.3L999.91,774.6L999.98,743.9L1000.04,752.7L1000.11,761.4L1000.18,761.4L1000.24,748.3L1000.31,726.3L1000.38,743.9L1000.45,748.3L1000.51,743.9L1000.58,735.1L1000.65,757.0L1000.71,743.9L1000.78,748.3L1000.85,743.9L1000.91,739.5L1000.98,748.3L1001.05,739.5L1001.11,735.1L1001.18,748.3L1001.25,752.7L1001.31,735.1L1001.38,748.3L1001.45,752.7L1001.51,765.8L1001.58,739.5L1001.65,752.7L1001.71,748.3L1001.78,717.5L1001.85,748.3L1001.91,743.9L1001.98,752.7L1002.05,748.3L1002.12,730.7L1002.18,757.0L1002.25,761.4L1002.32,735.1L1002.38,735.1L1002.45,757.0L1002.52,735.1L1002.58,752.7L1002.65,752.7L1002.72,735.1L1002.78,748.3L1002.85,739.5L1002.92,748.3L1002.98,770.2L1003.05,748.3L1003.12,761.4L1003.18,770.2L1003.25,748.3L1003.32,748.3L1003.38,735.1L1003.45,757.0L1003.52,743.9L1003.58,735.1L1003.65,739.5L1003.72,752.7L1003.79,743.9L1003.85,739.5L1003.92,743.9L1003.99,743.9L1004.05,757.0L1004.12,761.4L1004.19,752.7L1004.25,739.5L1004.32,748.3L1004.39,757.0L1004.45,748.3L1004.52,735.1L1004.59,739.5L1004.65,752.7L1004.72,739.5L1004.79,748.3L1004.85,743.9L1004.92,748.3L1004.99,743.9L1005.05,748.3L1005.12,730.7L1005.19,748.3L1005.25,743.9L1005.32,739.5L1005.39,739.5L1005.46,743.9L1005.52,739.5L1005.59,748.3L1005.66,743.9L1005.72,743.9L1005.79,717.5L1005.86,739.5L1005.92,743.9L1005.99,757.0L1006.06,735.1L1006.12,730.7L1006.19,735.1L1006.26,757.0L1006.32,770.2L1006.39,761.4L1006.46,757.0L1006.52,761.4L1006.59,748.3L1006.66,757.0L1006.72,743.9L1006.79,765.8L1006.86,726.3L1006.92,739.5L1006.99,748.3L1007.06,757.0L1007.13,765.8L1007.19,739.5L1007.26,752.7L1007.33,761.4L1007.39,761.4L1007.46,761.4L1007.53,752.7L1007.59,743.9L1007.66,743.9L1007.73,743.9L1007.79,752.7L1007.86,730.7L1007.93,743.9L1007.99,735.1L1008.06,743.9L1008.13,739.5L1008.19,735.1L1008.26,752.7L1008.33,735.1L1008.39,743.9L1008.46,748.3L1008.53,757.0L1008.59,730.7L1008.66,752.7L1008.73,752.7L1008.80,757.0L1008.86,752.7L1008.93,743.9L1009.00,770.2L1009.06,739.5L1009.13,739.5L1009.20,743.9L1009.26,739.5L1009.33,735.1L1009.40,748.3L1009.46,761.4L1009.53,770.2L1009.60,739.5L1009.66,752.7L1009.73,757.0L1009.80,743.9L1009.86,752.7L1009.93,765.8L1010.00,757.0L1010.06,752.7L1010.13,735.1L1010.20,743.9L1010.26,743.9L1010.33,748.3L1010.40,757.0L1010.47,743.9L1010.53,726.3L1010.60,752.7L1010.67,739.5L1010.73,761.4L1010.80,761.4L1010.87,752.7L1010.93,748.3L1011.00,748.3L1011.07,743.9L1011.13,730.7L1011.20,752.7L1011.27,752.7L1011.33,765.8L1011.40,752.7L1011.47,743.9L1011.53,757.0L1011.60,752.7L1011.67,743.9L1011.73,743.9L1011.80,743.9L1011.87,752.7L1011.93,752.7L1012.00,757.0L1012.07,748.3L1012.14,739.5L1012.20,748.3L1012.27,748.3L1012.34,757.0L1012.40,752.7L1012.47,761.4L1012.54,748.3L1012.60,752.7L1012.67,739.5L1012.74,752.7L1012.80,735.1L1012.87,743.9L1012.94,752.7L1013.00,748.3L1013.07,752.7L1013.14,730.7L1013.20,748.3L1013.27,752.7L1013.34,752.7L1013.40,752.7L1013.47,757.0L1013.54,743.9L1013.60,757.0L1013.67,757.0L1013.74,757.0L1013.81,761.4L1013.87,748.3L1013.94,730.7L1014.01,743.9L1014.07,757.0L1014.14,743.9L1014.21,726.3L1014.27,752.7L1014.34,748.3L1014.41,739.5L1014.47,761.4L1014.54,761.4L1014.61,743.9L1014.67,761.4L1014.74,743.9L1014.81,743.9L1014.87,735.1L1014.94,730.7L1015.01,743.9L1015.07,761.4L1015.14,743.9L1015.21,752.7L1015.27,743.9L1015.34,743.9L1015.41,743.9L1015.48,735.1L1015.54,757.0L1015.61,757.0L1015.68,752.7L1015.74,721.9L1015.81,748.3L1015.88,743.9L1015.94,735.1L1016.01,739.5L1016.08,743.9L1016.14,735.1L1016.21,739.5L1016.28,735.1L1016.34,735.1L1016.41,748.3L1016.48,748.3L1016.54,752.7L1016.61,774.6L1016.68,752.7L1016.74,757.0L1016.81,748.3L1016.88,757.0L1016.94,757.0L1017.01,757.0L1017.08,743.9L1017.15,730.7L1017.21,730.7L1017.28,739.5L1017.35,748.3L1017.41,743.9L1017.48,739.5L1017.55,730.7L1017.61,743.9L1017.68,748.3L1017.75,757.0L1017.81,739.5L1017.88,748.3L1017.95,748.3L1018.01,761.4L1018.08,743.9L1018.15,748.3L1018.21,743.9L1018.28,748.3L1018.35,743.9L1018.41,735.1L1018.48,739.5L1018.55,761.4L1018.61,752.7L1018.68,748.3L1018.75,748.3L1018.82,739.5L1018.88,752.7L1018.95,739.5L1019.02,726.3L1019.08,739.5L1019.15,743.9L1019.22,748.3L1019.28,757.0L1019.35,743.9L1019.42,726.3L1019.48,743.9L1019.55,743.9L1019.62,757.0L1019.68,748.3L1019.75,761.4L1019.82,748.3L1019.88,752.7L1019.95,752.7L1020.02,735.1L1020.08,743.9L1020.15,735.1L1020.22,717.5L1020.28,743.9L1020.35,761.4L1020.42,743.9L1020.49,752.7L1020.55,743.9L1020.62,770.2L1020.69,752.7L1020.75,743.9L1020.82,743.9L1020.89,739.5L1020.95,752.7L1021.02,721.9L1021.09,735.1L1021.15,735.1L1021.22,752.7L1021.29,761.4L1021.35,735.1L1021.42,757.0L1021.49,739.5L1021.55,770.2L1021.62,752.7L1021.69,761.4L1021.75,761.4L1021.82,743.9L1021.89,726.3L1021.95,743.9L1022.02,748.3L1022.09,743.9L1022.16,735.1L1022.22,739.5L1022.29,743.9L1022.36,748.3L1022.42,752.7L1022.49,739.5L1022.56,743.9L1022.62,757.0L1022.69,752.7L1022.76,743.9L1022.82,735.1L1022.89,739.5L1022.96,748.3L1023.02,743.9L1023.09,752.7L1023.16,748.3L1023.22,748.3L1023.29,748.3L1023.36,739.5L1023.42,761.4L1023.49,748.3L1023.56,752.7L1023.62,735.1L1023.69,743.9L1023.76,748.3L1023.83,735.1L1023.89,761.4L1023.96,743.9L1024.03,739.5L1024.09,752.7L1024.16,752.7L1024.23,761.4L1024.29,743.9L1024.36,748.3L1024.43,752.7L1024.49,761.4L1024.56,743.9L1024.63,743.9L1024.69,752.7L1024.76,739.5L1024.83,748.3L1024.89,748.3L1024.96,752.7L1025.03,735.1L1025.09,739.5L1025.16,730.7L1025.23,748.3L1025.29,748.3L1025.36,743.9L1025.43,761.4L1025.50,748.3L1025.56,757.0L1025.63,748.3L1025.70,739.5L1025.76,743.9L1025.83,765.8L1025.90,752.7L1025.96,752.7L1026.03,739.5L1026.10,761.4L1026.16,748.3L1026.23,752.7L1026.30,761.4L1026.36,743.9L1026.43,748.3L1026.50,752.7L1026.56,743.9L1026.63,757.0L1026.70,739.5L1026.76,735.1L1026.83,765.8L1026.90,743.9L1026.96,757.0L1027.03,743.9L1027.10,730.7L1027.17,743.9L1027.23,752.7L1027.30,739.5L1027.37,752.7L1027.43,726.3L1027.50,739.5L1027.57,757.0L1027.63,743.9L1027.70,757.0L1027.77,748.3L1027.83,726.3L1027.90,743.9L1027.97,752.7L1028.03,748.3L1028.10,757.0L1028.17,739.5L1028.23,757.0L1028.30,765.8L1028.37,748.3L1028.43,735.1L1028.50,739.5L1028.57,752.7L1028.63,726.3L1028.70,735.1L1028.77,739.5L1028.84,752.7L1028.90,757.0L1028.97,730.7L1029.04,730.7L1029.10,735.1L1029.17,757.0L1029.24,748.3L1029.30,770.2L1029.37,757.0L1029.44,752.7L1029.50,726.3L1029.57,748.3L1029.64,757.0L1029.70,743.9L1029.77,726.3L1029.84,743.9L1029.90,735.1L1029.97,743.9L1030.04,757.0L1030.10,748.3L1030.17,752.7L1030.24,748.3L1030.30,730.7L1030.37,761.4L1030.44,743.9L1030.51,757.0L1030.57,752.7L1030.64,748.3L1030.71,761.4L1030.77,757.0L1030.84,752.7L1030.91,739.5L1030.97,743.9L1031.04,739.5L1031.11,757.0L1031.17,757.0L1031.24,757.0L1031.31,765.8L1031.37,735.1L1031.44,761.4L1031.51,735.1L1031.57,721.9L1031.64,761.4L1031.71,748.3L1031.77,730.7L1031.84,735.1L1031.91,735.1L1031.97,735.1L1032.04,748.3L1032.11,761.4L1032.18,735.1L1032.24,748.3L1032.31,757.0L1032.38,726.3L1032.44,743.9L1032.51,765.8L1032.58,752.7L1032.64,735.1L1032.71,752.7L1032.78,748.3L1032.84,757.0L1032.91,752.7L1032.98,757.0L1033.04,757.0L1033.11,735.1L1033.18,739.5L1033.24,748.3L1033.31,739.5L1033.38,735.1L1033.44,739.5L1033.51,743.9L1033.58,739.5L1033.64,752.7L1033.71,770.2L1033.78,761.4L1033.85,757.0L1033.91,757.0L1033.98,743.9L1034.05,735.1L1034.11,739.5L1034.18,752.7L1034.25,739.5L1034.31,757.0L1034.38,743.9L1034.45,735.1L1034.51,761.4L1034.58,752.7L1034.65,735.1L1034.71,761.4L1034.78,739.5L1034.85,735.1L1034.91,765.8L1034.98,743.9L1035.05,748.3L1035.11,752.7L1035.18,743.9L1035.25,748.3L1035.31,735.1L1035.38,743.9L1035.45,739.5L1035.52,757.0L1035.58,757.0L1035.65,726.3L1035.72,748.3L1035.78,748.3L1035.85,743.9L1035.92,757.0L1035.98,739.5L1036.05,752.7L1036.12,748.3L1036.18,739.5L1036.25,743.9L1036.32,748.3L1036.38,739.5L1036.45,739.5L1036.52,752.7L1036.58,757.0L1036.65,765.8L1036.72,748.3L1036.78,730.7L1036.85,739.5L1036.92,748.3L1036.98,752.7L1037.05,735.1L1037.12,761.4L1037.19,761.4L1037.25,739.5L1037.32,765.8L1037.39,757.0L1037.45,757.0L1037.52,752.7L1037.59,752.7L1037.65,748.3L1037.72,748.3L1037.79,748.3L1037.85,743.9L1037.92,752.7L1037.99,752.7L1038.05,774.6L1038.12,730.7L1038.19,739.5L1038.25,743.9L1038.32,735.1L1038.39,761.4L1038.45,743.9L1038.52,730.7L1038.59,757.0L1038.65,730.7L1038.72,743.9L1038.79,743.9L1038.86,721.9L1038.92,748.3L1038.99,774.6L1039.06,770.2L1039.12,748.3L1039.19,735.1L1039.26,735.1L1039.32,735.1L1039.39,743.9L1039.46,735.1L1039.52,752.7L1039.59,735.1L1039.66,735.1L1039.72,735.1L1039.79,748.3L1039.86,739.5L1039.92,752.7L1039.99,748.3L1040.06,743.9L1040.12,739.5L1040.19,748.3L1040.26,743.9L1040.32,752.7L1040.39,752.7L1040.46,735.1L1040.53,739.5L1040.59,752.7L1040.66,748.3L1040.73,743.9L1040.79,739.5L1040.86,765.8L1040.93,748.3L1040.99,743.9L1041.06,739.5L1041.13,757.0L1041.19,752.7L1041.26,735.1L1041.33,752.7L1041.39,748.3L1041.46,757.0L1041.53,757.0L1041.59,748.3L1041.66,748.3L1041.73,748.3L1041.79,748.3L1041.86,752.7L1041.93,761.4L1041.99,735.1L1042.06,752.7L1042.13,739.5L1042.20,743.9L1042.26,757.0L1042.33,748.3L1042.40,757.0L1042.46,748.3L1042.53,761.4L1042.60,748.3L1042.66,761.4L1042.73,748.3L1042.80,752.7L1042.86,735.1L1042.93,752.7L1043.00,726.3L1043.06,739.5L1043.13,752.7L1043.20,748.3L1043.26,743.9L1043.33,730.7L1043.40,748.3L1043.46,743.9L1043.53,765.8L1043.60,748.3L1043.66,735.1L1043.73,752.7L1043.80,752.7L1043.87,743.9L1043.93,739.5L1044.00,743.9L1044.07,757.0L1044.13,748.3L1044.20,757.0L1044.27,752.7L1044.33,757.0L1044.40,743.9L1044.47,743.9L1044.53,730.7L1044.60,743.9L1044.67,748.3L1044.73,748.3L1044.80,739.5L1044.87,739.5L1044.93,757.0L1045.00,735.1L1045.07,743.9L1045.13,730.7L1045.20,743.9L1045.27,726.3L1045.33,743.9L1045.40,730.7L1045.47,739.5L1045.54,752.7L1045.60,735.1L1045.67,748.3L1045.74,757.0L1045.80,757.0L1045.87,726.3L1045.94,757.0L1046.00,748.3L1046.07,752.7L1046.14,726.3L1046.20,761.4L1046.27,748.3L1046.34,735.1L1046.40,752.7L1046.47,765.8L1046.54,748.3L1046.60,761.4L1046.67,743.9L1046.74,748.3L1046.80,748.3L1046.87,757.0L1046.94,748.3L1047.00,743.9L1047.07,748.3L1047.14,739.5L1047.21,752.7L1047.27,748.3L1047.34,774.6L1047.41,735.1L1047.47,735.1L1047.54,743.9L1047.61,730.7L1047.67,743.9L1047.74,752.7L1047.81,748.3L1047.87,761.4L1047.94,757.0L1048.01,717.5L1048.07,743.9L1048.14,730.7L1048.21,739.5L1048.27,739.5L1048.34,752.7L1048.41,735.1L1048.47,748.3L1048.54,739.5L1048.61,739.5L1048.67,735.1L1048.74,752.7L1048.81,757.0L1048.88,739.5L1048.94,752.7L1049.01,752.7L1049.08,765.8L1049.14,748.3L1049.21,739.5L1049.28,748.3L1049.34,721.9L1049.41,748.3L1049.48,735.1L1049.54,757.0L1049.61,761.4L1049.68,730.7L1049.74,735.1L1049.81,748.3L1049.88,748.3L1049.94,726.3L1050.01,752.7L1050.08,761.4L1050.14,743.9L1050.21,748.3L1050.28,761.4L1050.34,752.7L1050.41,739.5L1050.48,761.4L1050.55,752.7L1050.61,757.0L1050.68,743.9L1050.75,748.3L1050.81,752.7L1050.88,748.3L1050.95,735.1L1051.01,739.5L1051.08,739.5L1051.15,752.7L1051.21,752.7L1051.28,735.1L1051.35,748.3L1051.41,739.5L1051.48,739.5L1051.55,743.9L1051.61,743.9L1051.68,739.5L1051.75,770.2L1051.81,743.9L1051.88,757.0L1051.95,757.0L1052.01,721.9L1052.08,730.7L1052.15,752.7L1052.22,735.1L1052.28,743.9L1052.35,765.8L1052.42,748.3L1052.48,748.3L1052.55,748.3L1052.62,739.5L1052.68,726.3L1052.75,761.4L1052.82,752.7L1052.88,743.9L1052.95,748.3L1053.02,748.3L1053.08,752.7L1053.15,739.5L1053.22,765.8L1053.28,757.0L1053.35,735.1L1053.42,739.5L1053.48,730.7L1053.55,739.5L1053.62,752.7L1053.68,739.5L1053.75,765.8L1053.82,743.9L1053.89,748.3L1053.95,748.3L1054.02,739.5L1054.09,739.5L1054.15,752.7L1054.22,735.1L1054.29,752.7L1054.35,743.9L1054.42,752.7L1054.49,739.5L1054.55,743.9L1054.62,757.0L1054.69,735.1L1054.75,748.3L1054.82,757.0L1054.89,748.3L1054.95,743.9L1055.02,717.5L1055.09,748.3L1055.15,765.8L1055.22,757.0L1055.29,730.7L1055.35,748.3L1055.42,739.5L1055.49,739.5L1055.56,743.9L1055.62,748.3L1055.69,730.7L1055.76,748.3L1055.82,752.7L1055.89,739.5L1055.96,735.1L1056.02,748.3L1056.09,752.7L1056.16,765.8L1056.22,752.7L1056.29,743.9L1056.36,752.7L1056.42,765.8L1056.49,748.3L1056.56,748.3L1056.62,743.9L1056.69,748.3L1056.76,761.4L1056.82,770.2L1056.89,743.9L1056.96,743.9L1057.02,748.3L1057.09,761.4L1057.16,765.8L1057.23,743.9L1057.29,765.8L1057.36,739.5L1057.43,765.8L1057.49,730.7L1057.56,752.7L1057.63,739.5L1057.69,752.7L1057.76,757.0L1057.83,748.3L1057.89,752.7L1057.96,748.3L1058.03,748.3L1058.09,757.0L1058.16,735.1L1058.23,739.5L1058.29,743.9L1058.36,748.3L1058.43,743.9L1058.49,752.7L1058.56,743.9L1058.63,743.9L1058.69,765.8L1058.76,735.1L1058.83,752.7L1058.90,739.5L1058.96,757.0L1059.03,748.3L1059.10,743.9L1059.16,774.6L1059.23,743.9L1059.30,743.9L1059.36,743.9L1059.43,739.5L1059.50,748.3L1059.56,748.3L1059.63,761.4L1059.70,765.8L1059.76,748.3L1059.83,743.9L1059.90,743.9L1059.96,730.7L1060.03,757.0L1060.10,735.1L1060.16,743.9L1060.23,735.1L1060.30,757.0L1060.36,748.3L1060.43,748.3L1060.50,752.7L1060.57,735.1L1060.63,743.9L1060.70,779.0L1060.77,743.9L1060.83,743.9L1060.90,748.3L1060.97,748.3L1061.03,735.1L1061.10,743.9L1061.17,739.5L1061.23,748.3L1061.30,748.3L1061.37,752.7L1061.43,717.5L1061.50,743.9L1061.57,761.4L1061.63,757.0L1061.70,757.0L1061.77,757.0L1061.83,743.9L1061.90,757.0L1061.97,752.7L1062.03,748.3L1062.10,752.7L1062.17,748.3L1062.24,739.5L1062.30,748.3L1062.37,743.9L1062.44,739.5L1062.50,757.0L1062.57,739.5L1062.64,757.0L1062.70,761.4L1062.77,752.7L1062.84,739.5L1062.90,765.8L1062.97,752.7L1063.04,735.1L1063.10,757.0L1063.17,721.9L1063.24,739.5L1063.30,757.0L1063.37,739.5L1063.44,748.3L1063.50,748.3L1063.57,748.3L1063.64,757.0L1063.70,757.0L1063.77,730.7L1063.84,743.9L1063.91,752.7L1063.97,748.3L1064.04,743.9L1064.11,752.7L1064.17,752.7L1064.24,757.0L1064.31,748.3L1064.37,743.9L1064.44,735.1L1064.51,739.5L1064.57,730.7L1064.64,752.7L1064.71,748.3L1064.77,752.7L1064.84,757.0L1064.91,726.3L1064.97,735.1L1065.04,735.1L1065.11,748.3L1065.17,735.1L1065.24,739.5L1065.31,735.1L1065.37,743.9L1065.44,735.1L1065.51,743.9L1065.58,748.3L1065.64,739.5L1065.71,757.0L1065.78,735.1L1065.84,730.7L1065.91,748.3L1065.98,761.4L1066.04,748.3L1066.11,730.7L1066.18,743.9L1066.24,735.1L1066.31,743.9L1066.38,743.9L1066.44,739.5L1066.51,761.4L1066.58,735.1L1066.64,735.1L1066.71,752.7L1066.78,739.5L1066.84,735.1L1066.91,748.3L1066.98,752.7L1067.04,748.3L1067.11,765.8L1067.18,761.4L1067.25,748.3L1067.31,761.4L1067.38,739.5L1067.45,757.0L1067.51,735.1L1067.58,752.7L1067.65,739.5L1067.71,743.9L1067.78,752.7L1067.85,748.3L1067.91,743.9L1067.98,752.7L1068.05,748.3L1068.11,739.5L1068.18,739.5L1068.25,735.1L1068.31,765.8L1068.38,735.1L1068.45,735.1L1068.51,748.3L1068.58,752.7L1068.65,748.3L1068.71,765.8L1068.78,757.0L1068.85,757.0L1068.92,761.4L1068.98,730.7L1069.05,752.7L1069.12,735.1L1069.18,757.0L1069.25,743.9L1069.32,748.3L1069.38,752.7L1069.45,739.5L1069.52,757.0L1069.58,743.9L1069.65,743.9L1069.72,765.8L1069.78,735.1L1069.85,757.0L1069.92,765.8L1069.98,739.5L1070.05,757.0L1070.12,743.9L1070.18,739.5L1070.25,748.3L1070.32,748.3L1070.38,748.3L1070.45,748.3L1070.52,752.7L1070.59,730.7L1070.65,748.3L1070.72,748.3L1070.79,752.7L1070.85,748.3L1070.92,730.7L1070.99,730.7L1071.05,743.9L1071.12,748.3L1071.19,739.5L1071.25,730.7L1071.32,743.9L1071.39,770.2L1071.45,735.1L1071.52,770.2L1071.59,735.1L1071.65,748.3L1071.72,748.3L1071.79,757.0L1071.85,748.3L1071.92,743.9L1071.99,743.9L1072.05,743.9L1072.12,743.9L1072.19,743.9L1072.26,726.3L1072.32,735.1L1072.39,752.7L1072.46,735.1L1072.52,748.3L1072.59,735.1L1072.66,752.7L1072.72,743.9L1072.79,739.5L1072.86,739.5L1072.92,730.7L1072.99,752.7L1073.06,748.3L1073.12,743.9L1073.19,739.5L1073.26,752.7L1073.32,739.5L1073.39,748.3L1073.46,757.0L1073.52,752.7L1073.59,757.0L1073.66,743.9L1073.72,743.9L1073.79,739.5L1073.86,743.9L1073.93,783.4L1073.99,743.9L1074.06,730.7L1074.13,757.0L1074.19,743.9L1074.26,761.4L1074.33,739.5L1074.39,752.7L1074.46,752.7L1074.53,748.3L1074.59,752.7L1074.66,765.8L1074.73,748.3L1074.79,748.3L1074.86,726.3L1074.93,748.3L1074.99,748.3L1075.06,743.9L1075.13,721.9L1075.19,739.5L1075.26,743.9L1075.33,748.3L1075.39,761.4L1075.46,739.5L1075.53,743.9L1075.60,739.5L1075.66,761.4L1075.73,739.5L1075.80,726.3L1075.86,761.4L1075.93,739.5L1076.00,717.5L1076.06,743.9L1076.13,748.3L1076.20,757.0L1076.26,739.5L1076.33,757.0L1076.40,752.7L1076.46,752.7L1076.53,735.1L1076.60,748.3L1076.66,748.3L1076.73,743.9L1076.80,752.7L1076.86,757.0L1076.93,752.7L1077.00,726.3L1077.06,726.3L1077.13,743.9L1077.20,743.9L1077.27,752.7L1077.33,748.3L1077.40,743.9L1077.47,761.4L1077.53,735.1L1077.60,726.3L1077.67,743.9L1077.73,752.7L1077.80,735.1L1077.87,743.9L1077.93,735.1L1078.00,730.7L1078.07,739.5L1078.13,739.5L1078.20,730.7L1078.27,739.5L1078.33,743.9L1078.40,752.7L1078.47,748.3L1078.53,739.5L1078.60,748.3L1078.67,739.5L1078.73,752.7L1078.80,743.9L1078.87,726.3L1078.94,735.1L1079.00,743.9L1079.07,748.3L1079.14,748.3L1079.20,748.3L1079.27,730.7L1079.34,735.1L1079.40,743.9L1079.47,739.5L1079.54,735.1L1079.60,752.7L1079.67,748.3L1079.74,739.5L1079.80,743.9L1079.87,748.3L1079.94,752.7L1080.00,761.4L1080.07,748.3L1080.14,726.3L1080.20,743.9L1080.27,770.2L1080.34,730.7L1080.40,757.0L1080.47,739.5L1080.54,757.0L1080.61,743.9L1080.67,743.9L1080.74,748.3L1080.81,757.0L1080.87,735.1L1080.94,726.3L1081.01,739.5L1081.07,743.9L1081.14,735.1L1081.21,743.9L1081.27,743.9L1081.34,752.7L1081.41,739.5L1081.47,748.3L1081.54,752.7L1081.61,748.3L1081.67,726.3L1081.74,752.7L1081.81,743.9L1081.87,752.7L1081.94,735.1L1082.01,748.3L1082.07,748.3L1082.14,748.3L1082.21,752.7L1082.28,730.7L1082.34,748.3L1082.41,739.5L1082.48,765.8L1082.54,752.7L1082.61,743.9L1082.68,739.5L1082.74,748.3L1082.81,721.9L1082.88,748.3L1082.94,739.5L1083.01,739.5L1083.08,757.0L1083.14,743.9L1083.21,748.3L1083.28,743.9L1083.34,743.9L1083.41,752.7L1083.48,752.7L1083.54,735.1L1083.61,739.5L1083.68,748.3L1083.74,761.4L1083.81,752.7L1083.88,743.9L1083.95,748.3L1084.01,743.9L1084.08,752.7L1084.15,739.5L1084.21,743.9L1084.28,757.0L1084.35,735.1L1084.41,752.7L1084.48,748.3L1084.55,739.5L1084.61,735.1L1084.68,761.4L1084.75,752.7L1084.81,730.7L1084.88,743.9L1084.95,743.9L1085.01,730.7L1085.08,743.9L1085.15,765.8L1085.21,752.7L1085.28,739.5L1085.35,735.1L1085.41,739.5L1085.48,743.9L1085.55,743.9L1085.62,730.7L1085.68,739.5L1085.75,743.9L1085.82,752.7L1085.88,739.5L1085.95,735.1L1086.02,739.5L1086.08,739.5L1086.15,761.4L1086.22,748.3L1086.28,748.3L1086.35,765.8L1086.42,757.0L1086.48,743.9L1086.55,735.1L1086.62,748.3L1086.68,748.3L1086.75,735.1L1086.82,761.4L1086.88,757.0L1086.95,735.1L1087.02,739.5L1087.08,730.7L1087.15,739.5L1087.22,752.7L1087.29,735.1L1087.35,743.9L1087.42,739.5L1087.49,757.0L1087.55,748.3L1087.62,748.3L1087.69,752.7L1087.75,752.7L1087.82,748.3L1087.89,757.0L1087.95,735.1L1088.02,752.7L1088.09,739.5L1088.15,743.9L1088.22,735.1L1088.29,739.5L1088.35,752.7L1088.42,735.1L1088.49,735.1L1088.55,748.3L1088.62,748.3L1088.69,748.3L1088.75,752.7L1088.82,748.3L1088.89,735.1L1088.96,739.5L1089.02,752.7L1089.09,748.3L1089.16,739.5L1089.22,752.7L1089.29,743.9L1089.36,730.7L1089.42,726.3L1089.49,757.0L1089.56,735.1L1089.62,748.3L1089.69,743.9L1089.76,735.1L1089.82,743.9L1089.89,761.4L1089.96,770.2L1090.02,761.4L1090.09,743.9L1090.16,726.3L1090.22,761.4L1090.29,761.4L1090.36,739.5L1090.42,726.3L1090.49,730.7L1090.56,757.0L1090.63,735.1L1090.69,743.9L1090.76,743.9L1090.83,735.1L1090.89,752.7L1090.96,757.0L1091.03,739.5L1091.09,739.5L1091.16,757.0L1091.23,757.0L1091.29,748.3L1091.36,752.7L1091.43,743.9L1091.49,752.7L1091.56,752.7L1091.63,757.0L1091.69,761.4L1091.76,730.7L1091.83,735.1L1091.89,757.0L1091.96,748.3L1092.03,739.5L1092.09,748.3L1092.16,752.7L1092.23,752.7L1092.30,757.0L1092.36,743.9L1092.43,739.5L1092.50,739.5L1092.56,757.0L1092.63,748.3L1092.70,726.3L1092.76,730.7L1092.83,743.9L1092.90,739.5L1092.96,735.1L1093.03,752.7L1093.10,752.7L1093.16,752.7L1093.23,752.7L1093.30,748.3L1093.36,743.9L1093.43,726.3L1093.50,757.0L1093.56,748.3L1093.63,730.7L1093.70,717.5L1093.76,739.5L1093.83,748.3L1093.90,770.2L1093.97,735.1L1094.03,726.3L1094.10,761.4L1094.17,752.7L1094.23,743.9L1094.30,730.7L1094.37,730.7L1094.43,739.5L1094.50,748.3L1094.57,752.7L1094.63,739.5L1094.70,730.7L1094.77,743.9L1094.83,757.0L1094.90,752.7L1094.97,739.5L1095.03,748.3L1095.10,743.9L1095.17,752.7L1095.23,757.0L1095.30,770.2L1095.37,743.9L1095.43,726.3L1095.50,735.1L1095.57,748.3L1095.64,739.5L1095.70,748.3L1095.77,748.3L1095.84,748.3L1095.90,743.9L1095.97,752.7L1096.04,748.3L1096.10,730.7L1096.17,739.5L1096.24,743.9L1096.30,739.5L1096.37,752.7L1096.44,752.7L1096.50,752.7L1096.57,735.1L1096.64,761.4L1096.70,739.5L1096.77,761.4L1096.84,739.5L1096.90,757.0L1096.97,743.9L1097.04,730.7L1097.10,748.3L1097.17,761.4L1097.24,743.9L1097.31,757.0L1097.37,757.0L1097.44,726.3L1097.51,730.7L1097.57,743.9L1097.64,770.2L1097.71,743.9L1097.77,735.1L1097.84,761.4L1097.91,757.0L1097.97,757.0L1098.04,743.9L1098.11,739.5L1098.17,735.1L1098.24,730.7L1098.31,761.4L1098.37,752.7L1098.44,748.3L1098.51,752.7L1098.57,752.7L1098.64,743.9L1098.71,748.3L1098.77,739.5L1098.84,739.5L1098.91,748.3L1098.98,739.5L1099.04,748.3L1099.11,721.9L1099.18,739.5L1099.24,761.4L1099.31,730.7L1099.38,739.5L1099.44,743.9L1099.51,743.9L1099.58,761.4L1099.64,752.7L1099.71,743.9L1099.78,748.3L1099.84,748.3L1099.91,735.1L1099.98,743.9L1100.04,730.7L1100.11,757.0L1100.18,761.4L1100.24,748.3L1100.31,730.7L1100.38,735.1L1100.44,752.7L1100.51,748.3L1100.58,739.5L1100.65,752.7L1100.71,735.1L1100.78,752.7L1100.85,752.7L1100.91,748.3L1100.98,743.9L1101.05,757.0L1101.11,748.3L1101.18,752.7L1101.25,743.9L1101.31,739.5L1101.38,735.1L1101.45,730.7L1101.51,761.4L1101.58,761.4L1101.65,765.8L1101.71,735.1L1101.78,752.7L1101.85,739.5L1101.91,730.7L1101.98,748.3L1102.05,721.9L1102.11,748.3L1102.18,752.7L1102.25,735.1L1102.32,743.9L1102.38,743.9L1102.45,743.9L1102.52,748.3L1102.58,726.3L1102.65,757.0L1102.72,743.9L1102.78,761.4L1102.85,739.5L1102.92,730.7L1102.98,748.3L1103.05,726.3L1103.12,743.9L1103.18,748.3L1103.25,721.9L1103.32,757.0L1103.38,743.9L1103.45,748.3L1103.52,748.3L1103.58,743.9L1103.65,752.7L1103.72,752.7L1103.78,748.3L1103.85,761.4L1103.92,757.0L1103.99,743.9L1104.05,761.4L1104.12,743.9L1104.19,743.9L1104.25,739.5L1104.32,748.3L1104.39,752.7L1104.45,748.3L1104.52,730.7L1104.59,739.5L1104.65,757.0L1104.72,752.7L1104.79,765.8L1104.85,748.3L1104.92,752.7L1104.99,765.8L1105.05,752.7L1105.12,761.4L1105.19,761.4L1105.25,743.9L1105.32,735.1L1105.39,735.1L1105.45,752.7L1105.52,743.9L1105.59,757.0L1105.66,743.9L1105.72,743.9L1105.79,748.3L1105.86,743.9L1105.92,748.3L1105.99,735.1L1106.06,739.5L1106.12,757.0L1106.19,748.3L1106.26,765.8L1106.32,735.1L1106.39,743.9L1106.46,748.3L1106.52,761.4L1106.59,752.7L1106.66,757.0L1106.72,735.1L1106.79,752.7L1106.86,730.7L1106.92,735.1L1106.99,752.7L1107.06,730.7L1107.12,735.1L1107.19,743.9L1107.26,739.5L1107.33,743.9L1107.39,730.7L1107.46,757.0L1107.53,743.9L1107.59,748.3L1107.66,743.9L1107.73,748.3L1107.79,748.3L1107.86,757.0L1107.93,743.9L1107.99,735.1L1108.06,735.1L1108.13,748.3L1108.19,748.3L1108.26,743.9L1108.33,735.1L1108.39,739.5L1108.46,735.1L1108.53,748.3L1108.59,730.7L1108.66,735.1L1108.73,757.0L1108.79,748.3L1108.86,748.3L1108.93,748.3L1109.00,743.9L1109.06,774.6L1109.13,735.1L1109.20,752.7L1109.26,735.1L1109.33,743.9L1109.40,726.3L1109.46,752.7L1109.53,739.5L1109.60,752.7L1109.66,743.9L1109.73,739.5L1109.80,757.0L1109.86,748.3L1109.93,730.7L1110.00,757.0L1110.06,757.0L1110.13,739.5L1110.20,752.7L1110.26,757.0L1110.33,761.4L1110.40,748.3L1110.46,748.3L1110.53,752.7L1110.60,761.4L1110.67,757.0L1110.73,752.7L1110.80,752.7L1110.87,757.0L1110.93,739.5L1111.00,757.0L1111.07,743.9L1111.13,757.0L1111.20,735.1L1111.27,743.9L1111.33,739.5L1111.40,752.7L1111.47,752.7L1111.53,739.5L1111.60,743.9L1111.67,748.3L1111.73,735.1L1111.80,748.3L1111.87,752.7L1111.93,739.5L1112.00,739.5L1112.07,757.0L1112.13,752.7L1112.20,743.9L1112.27,735.1L1112.34,743.9L1112.40,743.9L1112.47,748.3L1112.54,730.7L1112.60,726.3L1112.67,752.7L1112.74,752.7L1112.80,739.5L1112.87,743.9L1112.94,743.9L1113.00,757.0L1113.07,743.9L1113.14,757.0L1113.20,726.3L1113.27,735.1L1113.34,752.7L1113.40,752.7L1113.47,752.7L1113.54,743.9L1113.60,739.5L1113.67,739.5L1113.74,735.1L1113.80,748.3L1113.87,735.1L1113.94,743.9L1114.01,748.3L1114.07,735.1L1114.14,757.0L1114.21,748.3L1114.27,730.7L1114.34,748.3L1114.41,735.1L1114.47,748.3L1114.54,743.9L1114.61,743.9L1114.67,739.5L1114.74,743.9L1114.81,752.7L1114.87,743.9L1114.94,735.1L1115.01,739.5L1115.07,743.9L1115.14,748.3L1115.21,748.3L1115.27,735.1L1115.34,748.3L1115.41,739.5L1115.47,748.3L1115.54,730.7L1115.61,770.2L1115.68,757.0L1115.74,735.1L1115.81,743.9L1115.88,757.0L1115.94,726.3L1116.01,743.9L1116.08,752.7L1116.14,743.9L1116.21,743.9L1116.28,752.7L1116.34,748.3L1116.41,752.7L1116.48,721.9L1116.54,757.0L1116.61,765.8L1116.68,743.9L1116.74,726.3L1116.81,743.9L1116.88,757.0L1116.94,743.9L1117.01,761.4L1117.08,748.3L1117.14,752.7L1117.21,743.9L1117.28,757.0L1117.35,752.7L1117.41,752.7L1117.48,752.7L1117.55,739.5L1117.61,739.5L1117.68,735.1L1117.75,752.7L1117.81,735.1L1117.88,739.5L1117.95,735.1L1118.01,761.4L1118.08,739.5L1118.15,752.7L1118.21,721.9L1118.28,748.3L1118.35,765.8L1118.41,730.7L1118.48,757.0L1118.55,757.0L1118.61,748.3L1118.68,757.0L1118.75,748.3L1118.81,748.3L1118.88,743.9L1118.95,757.0L1119.02,743.9L1119.08,757.0L1119.15,743.9L1119.22,748.3L1119.28,743.9L1119.35,748.3L1119.42,752.7L1119.48,748.3L1119.55,743.9L1119.62,752.7L1119.68,739.5L1119.75,761.4L1119.82,752.7L1119.88,743.9L1119.95,752.7L1120.02,748.3L1120.08,752.7L1120.15,761.4L1120.22,739.5L1120.28,743.9L1120.35,752.7L1120.42,748.3L1120.48,743.9L1120.55,739.5L1120.62,748.3L1120.69,748.3L1120.75,752.7L1120.82,752.7L1120.89,752.7L1120.95,748.3L1121.02,774.6L1121.09,757.0L1121.15,752.7L1121.22,739.5L1121.29,761.4L1121.35,748.3L1121.42,739.5L1121.49,748.3L1121.55,761.4L1121.62,730.7L1121.69,730.7L1121.75,739.5L1121.82,743.9L1121.89,743.9L1121.95,757.0L1122.02,748.3L1122.09,743.9L1122.15,743.9L1122.22,752.7L1122.29,735.1L1122.36,757.0L1122.42,770.2L1122.49,739.5L1122.56,752.7L1122.62,765.8L1122.69,757.0L1122.76,752.7L1122.82,761.4L1122.89,752.7L1122.96,752.7L1123.02,761.4L1123.09,735.1L1123.16,743.9L1123.22,735.1L1123.29,743.9L1123.36,761.4L1123.42,752.7L1123.49,735.1L1123.56,779.0L1123.62,735.1L1123.69,748.3L1123.76,743.9L1123.82,748.3L1123.89,757.0L1123.96,765.8L1124.03,748.3L1124.09,748.3L1124.16,748.3L1124.23,752.7L1124.29,761.4L1124.36,748.3L1124.43,765.8L1124.49,757.0L1124.56,739.5L1124.63,752.7L1124.69,726.3L1124.76,739.5L1124.83,761.4L1124.89,752.7L1124.96,743.9L1125.03,757.0L1125.09,757.0L1125.16,748.3L1125.23,752.7L1125.29,748.3L1125.36,765.8L1125.43,743.9L1125.49,717.5L1125.56,739.5L1125.63,748.3L1125.70,743.9L1125.76,761.4L1125.83,748.3L1125.90,739.5L1125.96,748.3L1126.03,730.7L1126.10,779.0L1126.16,761.4L1126.23,743.9L1126.30,743.9L1126.36,752.7L1126.43,730.7L1126.50,752.7L1126.56,743.9L1126.63,739.5L1126.70,743.9L1126.76,752.7L1126.83,743.9L1126.90,743.9L1126.96,743.9L1127.03,726.3L1127.10,739.5L1127.16,735.1L1127.23,748.3L1127.30,752.7L1127.37,757.0L1127.43,761.4L1127.50,717.5L1127.57,748.3L1127.63,743.9L1127.70,743.9L1127.77,743.9L1127.83,752.7L1127.90,735.1L1127.97,739.5L1128.03,748.3L1128.10,748.3L1128.17,739.5L1128.23,761.4L1128.30,743.9L1128.37,761.4L1128.43,743.9L1128.50,752.7L1128.57,752.7L1128.63,752.7L1128.70,739.5L1128.77,752.7L1128.83,726.3L1128.90,739.5L1128.97,743.9L1129.04,721.9L1129.10,739.5L1129.17,730.7L1129.24,752.7L1129.30,739.5L1129.37,739.5L1129.44,748.3L1129.50,735.1L1129.57,748.3L1129.64,735.1L1129.70,739.5L1129.77,739.5L1129.84,757.0L1129.90,757.0L1129.97,757.0L1130.04,757.0L1130.10,752.7L1130.17,743.9L1130.24,739.5L1130.30,757.0L1130.37,757.0L1130.44,730.7L1130.50,757.0L1130.57,757.0L1130.64,739.5L1130.71,761.4L1130.77,752.7L1130.84,726.3L1130.91,743.9L1130.97,739.5L1131.04,748.3L1131.11,739.5L1131.17,726.3L1131.24,748.3L1131.31,752.7L1131.37,735.1L1131.44,752.7L1131.51,743.9L1131.57,726.3L1131.64,748.3L1131.71,752.7L1131.77,743.9L1131.84,774.6L1131.91,761.4L1131.97,743.9L1132.04,761.4L1132.11,739.5L1132.17,730.7L1132.24,743.9L1132.31,739.5L1132.38,730.7L1132.44,743.9L1132.51,757.0L1132.58,730.7L1132.64,757.0L1132.71,721.9L1132.78,748.3L1132.84,770.2L1132.91,743.9L1132.98,743.9L1133.04,743.9L1133.11,770.2L1133.18,752.7L1133.24,739.5L1133.31,730.7L1133.38,743.9L1133.44,743.9L1133.51,748.3L1133.58,752.7L1133.64,761.4L1133.71,743.9L1133.78,743.9L1133.84,748.3L1133.91,748.3L1133.98,739.5L1134.05,765.8L1134.11,743.9L1134.18,743.9L1134.25,739.5L1134.31,748.3L1134.38,757.0L1134.45,748.3L1134.51,717.5L1134.58,730.7L1134.65,748.3L1134.71,730.7L1134.78,739.5L1134.85,743.9L1134.91,757.0L1134.98,757.0L1135.05,752.7L1135.11,765.8L1135.18,730.7L1135.25,743.9L1135.31,739.5L1135.38,748.3L1135.45,743.9L1135.51,752.7L1135.58,748.3L1135.65,735.1L1135.72,748.3L1135.78,739.5L1135.85,739.5L1135.92,752.7L1135.98,743.9L1136.05,730.7L1136.12,739.5L1136.18,739.5L1136.25,735.1L1136.32,761.4L1136.38,739.5L1136.45,757.0L1136.52,748.3L1136.58,748.3L1136.65,752.7L1136.72,735.1L1136.78,757.0L1136.85,743.9L1136.92,757.0L1136.98,752.7L1137.05,748.3L1137.12,743.9L1137.18,739.5L1137.25,761.4L1137.32,730.7L1137.39,743.9L1137.45,739.5L1137.52,748.3L1137.59,739.5L1137.65,743.9L1137.72,748.3L1137.79,739.5L1137.85,765.8L1137.92,739.5L1137.99,739.5L1138.05,748.3L1138.12,748.3L1138.19,743.9L1138.25,739.5L1138.32,739.5L1138.39,739.5L1138.45,743.9L1138.52,748.3L1138.59,748.3L1138.65,735.1L1138.72,748.3L1138.79,757.0L1138.85,743.9L1138.92,757.0L1138.99,757.0L1139.06,748.3L1139.12,752.7L1139.19,752.7L1139.26,739.5L1139.32,739.5L1139.39,757.0L1139.46,757.0L1139.52,743.9L1139.59,765.8L1139.66,743.9L1139.72,748.3L1139.79,752.7L1139.86,748.3L1139.92,726.3L1139.99,739.5L1140.06,735.1L1140.12,757.0L1140.19,761.4L1140.26,748.3L1140.32,748.3L1140.39,770.2L1140.46,748.3L1140.52,748.3L1140.59,739.5L1140.66,761.4L1140.73,748.3L1140.79,743.9L1140.86,752.7L1140.93,748.3L1140.99,765.8L1141.06,765.8L1141.13,743.9L1141.19,743.9L1141.26,752.7L1141.33,761.4L1141.39,752.7L1141.46,743.9L1141.53,752.7L1141.59,757.0L1141.66,757.0L1141.73,721.9L1141.79,761.4L1141.86,735.1L1141.93,752.7L1141.99,739.5L1142.06,743.9L1142.13,743.9L1142.19,765.8L1142.26,757.0L1142.33,757.0L1142.40,748.3L1142.46,743.9L1142.53,735.1L1142.60,735.1L1142.66,730.7L1142.73,743.9L1142.80,748.3L1142.86,748.3L1142.93,743.9L1143.00,743.9L1143.06,757.0L1143.13,735.1L1143.20,735.1L1143.26,761.4L1143.33,743.9L1143.40,743.9L1143.46,735.1L1143.53,765.8L1143.60,748.3L1143.66,739.5L1143.73,743.9L1143.80,748.3L1143.86,743.9L1143.93,739.5L1144.00,748.3L1144.07,748.3L1144.13,739.5L1144.20,748.3L1144.27,761.4L1144.33,752.7L1144.40,735.1L1144.47,735.1L1144.53,752.7L1144.60,752.7L1144.67,752.7L1144.73,752.7L1144.80,748.3L1144.87,730.7L1144.93,739.5L1145.00,748.3L1145.07,757.0L1145.13,730.7L1145.20,752.7L1145.27,752.7L1145.33,743.9L1145.40,743.9L1145.47,752.7L1145.53,748.3L1145.60,721.9L1145.67,748.3L1145.74,765.8L1145.80,730.7L1145.87,752.7L1145.94,761.4L1146.00,752.7L1146.07,748.3L1146.14,743.9L1146.20,748.3L1146.27,743.9L1146.34,743.9L1146.40,730.7L1146.47,743.9L1146.54,761.4L1146.60,726.3L1146.67,752.7L1146.74,748.3L1146.80,748.3L1146.87,739.5L1146.94,739.5L1147.00,757.0L1147.07,739.5L1147.14,752.7L1147.20,743.9L1147.27,757.0L1147.34,730.7L1147.41,739.5L1147.47,752.7L1147.54,761.4L1147.61,752.7L1147.67,743.9L1147.74,735.1L1147.81,735.1L1147.87,748.3L1147.94,765.8L1148.01,748.3L1148.07,761.4L1148.14,752.7L1148.21,739.5L1148.27,757.0L1148.34,757.0L1148.41,739.5L1148.47,721.9L1148.54,743.9L1148.61,743.9L1148.67,730.7L1148.74,735.1L1148.81,761.4L1148.87,757.0L1148.94,770.2L1149.01,752.7L1149.08,774.6L1149.14,748.3L1149.21,743.9L1149.28,739.5L1149.34,730.7L1149.41,735.1L1149.48,752.7L1149.54,752.7L1149.61,752.7L1149.68,752.7L1149.74,730.7L1149.81,752.7L1149.88,761.4L1149.94,752.7L1150.01,757.0L1150.08,743.9L1150.14,752.7L1150.21,739.5L1150.28,726.3L1150.34,748.3L1150.41,730.7L1150.48,748.3L1150.54,735.1L1150.61,761.4L1150.68,735.1L1150.75,743.9L1150.81,735.1L1150.88,748.3L1150.95,748.3L1151.01,752.7L1151.08,752.7L1151.15,748.3L1151.21,739.5L1151.28,739.5L1151.35,748.3L1151.41,743.9L1151.48,757.0L1151.55,748.3L1151.61,743.9L1151.68,739.5L1151.75,743.9L1151.81,748.3L1151.88,752.7L1151.95,748.3L1152.01,743.9L1152.08,748.3L1152.15,730.7L1152.21,752.7L1152.28,739.5L1152.35,748.3L1152.42,730.7L1152.48,765.8L1152.55,730.7L1152.62,748.3L1152.68,739.5L1152.75,743.9L1152.82,743.9L1152.88,735.1L1152.95,739.5L1153.02,743.9L1153.08,748.3L1153.15,752.7L1153.22,748.3L1153.28,726.3L1153.35,757.0L1153.42,770.2L1153.48,743.9L1153.55,770.2L1153.62,735.1L1153.68,743.9L1153.75,748.3L1153.82,743.9L1153.88,739.5L1153.95,752.7L1154.02,739.5L1154.09,761.4L1154.15,752.7L1154.22,739.5L1154.29,752.7L1154.35,743.9L1154.42,743.9L1154.49,735.1L1154.55,739.5L1154.62,774.6L1154.69,748.3L1154.75,743.9L1154.82,748.3L1154.89,735.1L1154.95,748.3L1155.02,743.9L1155.09,757.0L1155.15,757.0L1155.22,761.4L1155.29,757.0L1155.35,730.7L1155.42,757.0L1155.49,748.3L1155.55,752.7L1155.62,761.4L1155.69,752.7L1155.76,735.1L1155.82,752.7L1155.89,739.5L1155.96,757.0L1156.02,761.4L1156.09,739.5L1156.16,765.8L1156.22,743.9L1156.29,730.7L1156.36,743.9L1156.42,735.1L1156.49,765.8L1156.56,752.7L1156.62,752.7L1156.69,739.5L1156.76,748.3L1156.82,743.9L1156.89,743.9L1156.96,739.5L1157.02,757.0L1157.09,743.9L1157.16,748.3L1157.22,743.9L1157.29,752.7L1157.36,752.7L1157.43,739.5L1157.49,757.0L1157.56,743.9L1157.63,761.4L1157.69,757.0L1157.76,761.4L1157.83,752.7L1157.89,752.7L1157.96,748.3L1158.03,748.3L1158.09,761.4L1158.16,743.9L1158.23,735.1L1158.29,743.9L1158.36,748.3L1158.43,752.7L1158.49,739.5L1158.56,743.9L1158.63,748.3L1158.69,765.8L1158.76,743.9L1158.83,735.1L1158.89,748.3L1158.96,743.9L1159.03,748.3L1159.10,757.0L1159.16,735.1L1159.23,743.9L1159.30,743.9L1159.36,748.3L1159.43,739.5L1159.50,757.0L1159.56,748.3L1159.63,748.3L1159.70,730.7L1159.76,743.9L1159.83,735.1L1159.90,752.7L1159.96,739.5L1160.03,757.0L1160.10,717.5L1160.16,743.9L1160.23,726.3L1160.30,748.3L1160.36,757.0L1160.43,735.1L1160.50,721.9L1160.56,735.1L1160.63,739.5L1160.70,730.7L1160.77,739.5L1160.83,770.2L1160.90,730.7L1160.97,735.1L1161.03,752.7L1161.10,752.7L1161.17,739.5L1161.23,730.7L1161.30,748.3L1161.37,748.3L1161.43,761.4L1161.50,726.3L1161.57,730.7L1161.63,761.4L1161.70,739.5L1161.77,757.0L1161.83,748.3L1161.90,743.9L1161.97,735.1L1162.03,752.7L1162.10,757.0L1162.17,752.7L1162.23,748.3L1162.30,752.7L1162.37,761.4L1162.44,757.0L1162.50,721.9L1162.57,757.0L1162.64,752.7L1162.70,748.3L1162.77,752.7L1162.84,748.3L1162.90,730.7L1162.97,739.5L1163.04,765.8L1163.10,748.3L1163.17,748.3L1163.24,739.5L1163.30,735.1L1163.37,748.3L1163.44,752.7L1163.50,748.3L1163.57,739.5L1163.64,757.0L1163.70,739.5L1163.77,743.9L1163.84,748.3L1163.90,765.8L1163.97,739.5L1164.04,730.7L1164.11,735.1L1164.17,761.4L1164.24,752.7L1164.31,743.9L1164.37,730.7L1164.44,774.6L1164.51,761.4L1164.57,752.7L1164.64,735.1L1164.71,743.9L1164.77,743.9L1164.84,748.3L1164.91,743.9L1164.97,743.9L1165.04,739.5L1165.11,739.5L1165.17,743.9L1165.24,748.3L1165.31,748.3L1165.37,752.7L1165.44,748.3L1165.51,735.1L1165.57,752.7L1165.64,761.4L1165.71,739.5L1165.78,730.7L1165.84,748.3L1165.91,752.7L1165.98,735.1L1166.04,752.7L1166.11,735.1L1166.18,743.9L1166.24,739.5L1166.31,726.3L1166.38,761.4L1166.44,739.5L1166.51,752.7L1166.58,748.3L1166.64,752.7L1166.71,739.5L1166.78,730.7L1166.84,743.9L1166.91,752.7L1166.98,757.0L1167.04,748.3L1167.11,752.7L1167.18,761.4L1167.24,739.5L1167.31,743.9L1167.38,735.1L1167.45,735.1L1167.51,752.7L1167.58,739.5L1167.65,752.7L1167.71,743.9L1167.78,757.0L1167.85,743.9L1167.91,739.5L1167.98,726.3L1168.05,739.5L1168.11,735.1L1168.18,739.5L1168.25,748.3L1168.31,735.1L1168.38,752.7L1168.45,748.3L1168.51,739.5L1168.58,748.3L1168.65,735.1L1168.71,752.7L1168.78,761.4L1168.85,739.5L1168.91,748.3L1168.98,761.4L1169.05,739.5L1169.12,743.9L1169.18,739.5L1169.25,743.9L1169.32,743.9L1169.38,752.7L1169.45,726.3L1169.52,752.7L1169.58,761.4L1169.65,739.5L1169.72,770.2L1169.78,743.9L1169.85,739.5L1169.92,739.5L1169.98,765.8L1170.05,748.3L1170.12,743.9L1170.18,739.5L1170.25,757.0L1170.32,748.3L1170.38,748.3L1170.45,743.9L1170.52,735.1L1170.58,743.9L1170.65,739.5L1170.72,757.0L1170.79,752.7L1170.85,730.7L1170.92,748.3L1170.99,748.3L1171.05,743.9L1171.12,743.9L1171.19,739.5L1171.25,770.2L1171.32,739.5L1171.39,739.5L1171.45,730.7L1171.52,748.3L1171.59,748.3L1171.65,735.1L1171.72,735.1L1171.79,752.7L1171.85,735.1L1171.92,761.4L1171.99,739.5L1172.05,735.1L1172.12,739.5L1172.19,735.1L1172.25,761.4L1172.32,748.3L1172.39,752.7L1172.46,739.5L1172.52,739.5L1172.59,743.9L1172.66,752.7L1172.72,748.3L1172.79,739.5L1172.86,752.7L1172.92,735.1L1172.99,739.5L1173.06,739.5L1173.12,748.3L1173.19,765.8L1173.26,761.4L1173.32,783.4L1173.39,730.7L1173.46,757.0L1173.52,730.7L1173.59,757.0L1173.66,752.7L1173.72,752.7L1173.79,743.9L1173.86,752.7L1173.92,752.7L1173.99,748.3L1174.06,757.0L1174.13,748.3L1174.19,748.3L1174.26,752.7L1174.33,752.7L1174.39,730.7L1174.46,739.5L1174.53,748.3L1174.59,739.5L1174.66,743.9L1174.73,748.3L1174.79,748.3L1174.86,748.3L1174.93,739.5L1174.99,757.0L1175.06,752.7L1175.13,748.3L1175.19,743.9L1175.26,752.7L1175.33,730.7L1175.39,757.0L1175.46,739.5L1175.53,752.7L1175.59,748.3L1175.66,757.0L1175.73,743.9L1175.80,748.3L1175.86,752.7L1175.93,743.9L1176.00,752.7L1176.06,748.3L1176.13,743.9L1176.20,752.7L1176.26,735.1L1176.33,748.3L1176.40,761.4L1176.46,743.9L1176.53,735.1L1176.60,748.3L1176.66,748.3L1176.73,752.7L1176.80,735.1L1176.86,735.1L1176.93,761.4L1177.00,743.9L1177.06,739.5L1177.13,752.7L1177.20,739.5L1177.26,748.3L1177.33,748.3L1177.40,770.2L1177.47,748.3L1177.53,761.4L1177.60,761.4L1177.67,735.1L1177.73,735.1L1177.80,735.1L1177.87,739.5L1177.93,743.9L1178.00,739.5L1178.07,752.7L1178.13,743.9L1178.20,748.3L1178.27,730.7L1178.33,748.3L1178.40,748.3L1178.47,739.5L1178.53,743.9L1178.60,752.7L1178.67,757.0L1178.73,748.3L1178.80,748.3L1178.87,726.3L1178.93,743.9L1179.00,748.3L1179.07,748.3L1179.14,735.1L1179.20,739.5L1179.27,774.6L1179.34,757.0L1179.40,748.3L1179.47,739.5L1179.54,752.7L1179.60,752.7L1179.67,743.9L1179.74,761.4L1179.80,735.1L1179.87,757.0L1179.94,743.9L1180.00,765.8L1180.07,735.1L1180.14,752.7L1180.20,752.7L1180.27,752.7L1180.34,757.0L1180.40,757.0L1180.47,748.3L1180.54,774.6L1180.60,743.9L1180.67,752.7L1180.74,757.0L1180.81,748.3L1180.87,774.6L1180.94,739.5L1181.01,761.4L1181.07,739.5L1181.14,761.4L1181.21,739.5L1181.27,730.7L1181.34,743.9L1181.41,739.5L1181.47,752.7L1181.54,752.7L1181.61,726.3L1181.67,757.0L1181.74,739.5L1181.81,752.7L1181.87,752.7L1181.94,752.7L1182.01,743.9L1182.07,730.7L1182.14,743.9L1182.21,743.9L1182.27,743.9L1182.34,757.0L1182.41,757.0L1182.48,739.5L1182.54,757.0L1182.61,752.7L1182.68,739.5L1182.74,730.7L1182.81,752.7L1182.88,761.4L1182.94,743.9L1183.01,743.9L1183.08,757.0L1183.14,735.1L1183.21,735.1L1183.28,757.0L1183.34,739.5L1183.41,752.7L1183.48,770.2L1183.54,774.6L1183.61,743.9L1183.68,748.3L1183.74,748.3L1183.81,752.7L1183.88,743.9L1183.94,735.1L1184.01,743.9L1184.08,748.3L1184.15,748.3L1184.21,743.9L1184.28,726.3L1184.35,761.4L1184.41,752.7L1184.48,735.1L1184.55,752.7"/>
<rect x="911" y="689" width="274" height="120" fill="none" stroke="#262626" stroke-width="2"/>
<line x1="904.20" y1="775.00" x2="911.00" y2="775.00" stroke="#262626" stroke-width="2.0"/>
<text x="877.50" y="778.20" font-size="10.53" textLength="18.60" lengthAdjust="spacingAndGlyphs">240</text>
<line x1="904.20" y1="731.00" x2="911.00" y2="731.00" stroke="#262626" stroke-width="2.0"/>
<text x="877.50" y="734.30" font-size="10.53" textLength="18.60" lengthAdjust="spacingAndGlyphs">250</text>
<line x1="911.00" y1="809.00" x2="911.00" y2="815.80" stroke="#262626" stroke-width="2.0"/>
<text x="908.06" y="832.50" font-size="10.53" textLength="5.82" lengthAdjust="spacingAndGlyphs">0</text>
<line x1="978.00" y1="809.00" x2="978.00" y2="815.80" stroke="#262626" stroke-width="2.0"/>
<text x="965.40" y="832.50" font-size="10.53" textLength="24.80" lengthAdjust="spacingAndGlyphs">1000</text>
<line x1="1045.00" y1="809.00" x2="1045.00" y2="815.80" stroke="#262626" stroke-width="2.0"/>
<text x="1032.13" y="832.50" font-size="10.53" textLength="24.88" lengthAdjust="spacingAndGlyphs">2000</text>
<line x1="1111.00" y1="809.00" x2="1111.00" y2="815.80" stroke="#262626" stroke-width="2.0"/>
<text x="1099.04" y="832.50" font-size="10.53" textLength="24.76" lengthAdjust="spacingAndGlyphs">3000</text>
<line x1="1178.00" y1="809.00" x2="1178.00" y2="815.80" stroke="#262626" stroke-width="2.0"/>
<text x="1165.81" y="832.50" font-size="10.53" textLength="24.79" lengthAdjust="spacingAndGlyphs">4000</text>
<text x="1044.25" y="850.10" font-size="11.06" textLength="6.86" lengthAdjust="spacingAndGlyphs">Y</text>
<text transform="translate(866.24,768.07) rotate(-90)" x="0" y="0" font-size="11.06" textLength="34.76" lengthAdjust="spacingAndGlyphs">counts</text>
<text transform="translate(1194.49,730.12) rotate(90)" x="0" y="0" font-size="11.06" textLength="38.39" lengthAdjust="spacingAndGlyphs">cut in y</text>
<rect x="1108.8" y="691.60" width="72.9" height="16.1" rx="2.5" fill="#fff" fill-opacity="0.8" stroke="#d5d5d5" stroke-width="1"/>
<line x1="1111.20" y1="700.00" x2="1133.90" y2="700.00" stroke="#0000ff" stroke-width="1.5"/>
<text x="1137.18" y="702.40" font-size="10.79" textLength="40.15" lengthAdjust="spacingAndGlyphs">x=1074</text>
</svg>
<script>
(function(){
var c=document.getElementById('img');if(!c.getContext)return;var ctx=c.getContext('2d');
var w=c.width,h=c.height;var im=ctx.createImageData(w,h);var d=im.data;
var s=123456789;function rnd(){s^=s<<13;s^=s>>>17;s^=s<<5;return ((s>>>0)%1000000)/1000000;}
var CDF=[1e-06,5e-06,3.6e-05,0.000176,0.000719,0.002398,0.006916,0.018266,0.048814,0.114126,0.238574,0.391679,0.563466,0.71657,0.853025,0.935248,0.974602,0.990634,0.997473,0.999151,0.999775,0.999951,0.99999,0.999998,1.0],V0=234;
var vmin=243.725,vmax=248.275;
function hot(t){var r,g,b;if(t<0)t=0;if(t>1)t=1;
 r=t<0.365079?0.0416+t/0.365079*0.9584:1;
 g=t<0.365079?0:(t<0.746032?(t-0.365079)/0.380953:1);
 b=t<0.746032?0:(t-0.746032)/0.253968;return [Math.round(r*255),Math.round(g*255),Math.round(b*255)];}
var lut=[];for(var v=220;v<=272;v++){lut[v]=hot((v-vmin)/(vmax-vmin));}
function samp(){var u=rnd();var i=0;while(i<CDF.length-1&&u>CDF[i])i++;return V0+i;}
for(var y=0;y<h;y++){var fy=y/(h-1);var off=0.3+(-0.45-0.3)*fy-0.3*Math.max(0,(fy-0.8)/0.2);
 for(var x=0;x<w;x++){var o=off+0.2*(0.5-x/(w-1)); if(x>=w-3) o=off-2.0;
  var v=samp()+Math.floor(o+rnd());if(v<220)v=220;if(v>272)v=272;var col=lut[v];var k=(y*w+x)*4;
  d[k]=col[0];d[k+1]=col[1];d[k+2]=col[2];d[k+3]=255;}}
ctx.putImageData(im,0,0);
})();
</script>
</body></html>
